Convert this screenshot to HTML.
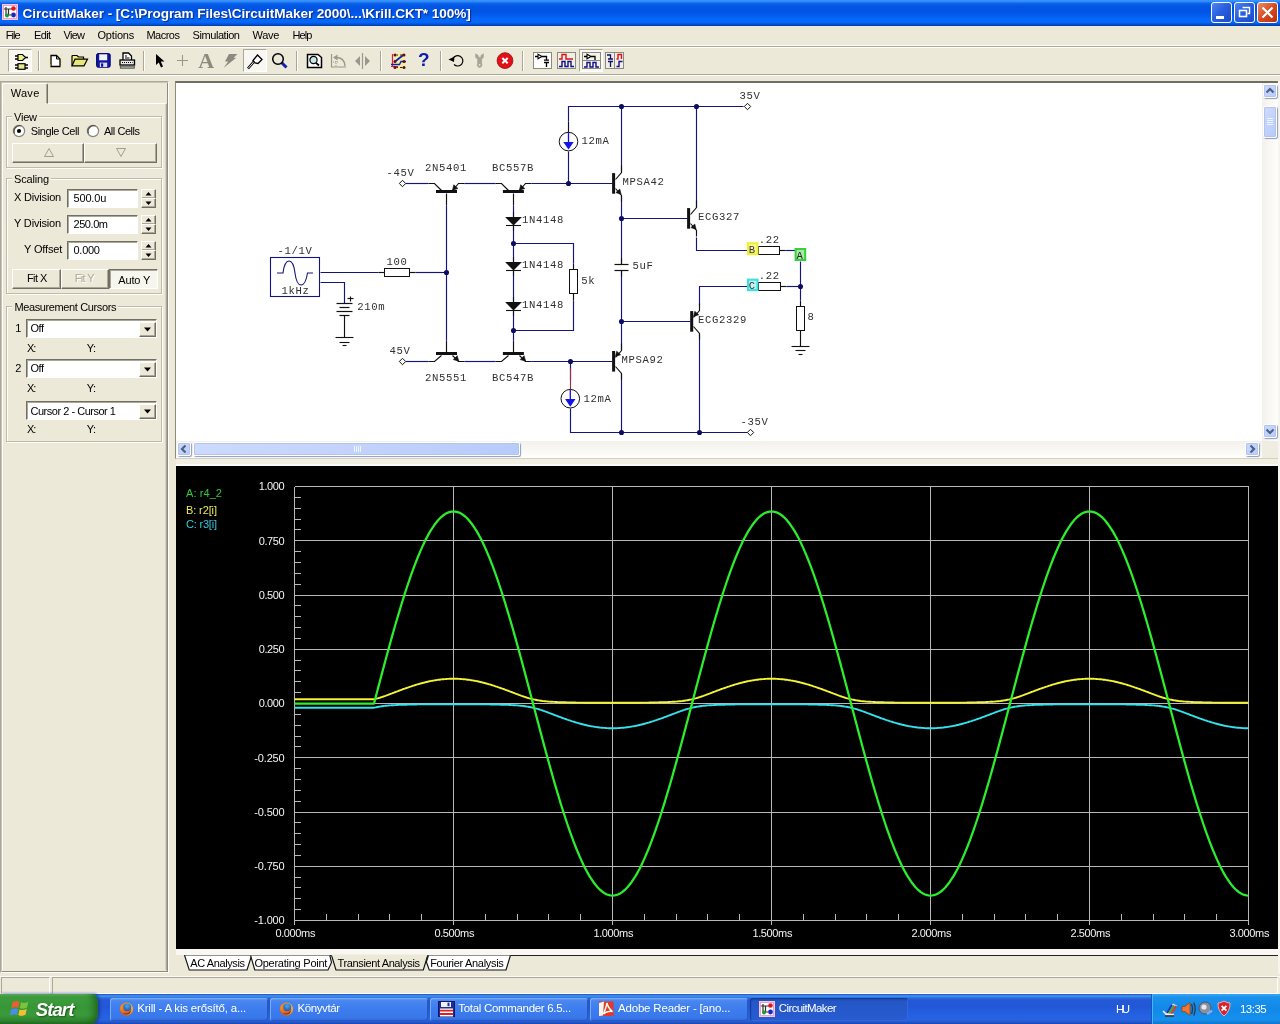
<!DOCTYPE html>
<html><head><meta charset="utf-8"><title>CircuitMaker</title>
<style>
*{box-sizing:border-box;margin:0;padding:0}
html,body{width:1280px;height:1024px;overflow:hidden;background:#ece9d8;font-family:"Liberation Sans",sans-serif;font-size:11px;color:#000}
div,span,svg{position:absolute}
svg{overflow:visible}
span,svg{will-change:opacity}
#titlebar{left:0;top:0;width:1280px;height:26px;
 background:linear-gradient(to bottom,#3e98ff 0%,#2e88fa 6%,#0c64ea 13%,#0256e4 22%,#0254e4 45%,#035cf0 60%,#0668fa 72%,#0668f6 86%,#0452d8 93%,#0236a8 100%);}
#titlebar .t{left:23px;top:4px;color:#fff;font-weight:bold;font-size:13.5px;text-shadow:1px 1px 1px #0a2a80;white-space:nowrap}
.cbtn{top:2px;width:21px;height:21px;border:1px solid #fff;border-radius:3px;background:linear-gradient(135deg,#4f86f0 0%,#2a5fe0 45%,#1c49c8 100%);}
.cbtn.close{background:linear-gradient(135deg,#ec8c6a 0%,#d64a22 50%,#b8300f 100%)}
#menubar{left:0;top:26px;width:1280px;height:20px;background:#ece9d8}
#menubar span{top:3px;font-size:11px;color:#000;white-space:nowrap}
.sep{top:51px;width:2px;height:20px;border-left:1px solid #aca899;border-right:1px solid #fff}
.pressed{background:#f8f7f1;border:1px solid;border-color:#aca899 #fff #fff #aca899}
.t11{font-size:11px;white-space:nowrap;color:#000}
.btn{background:#ece9d8;border:1px solid;border-color:#fff #716f64 #716f64 #fff;box-shadow:inset -1px -1px 0 #aca899}
.sunk{background:#fff;border:1px solid;border-color:#716f64 #fff #fff #716f64;box-shadow:inset 1px 1px 0 #aca899}
.grp{border:1px solid #bebba8;box-shadow:1px 1px 0 #fff, inset 1px 1px 0 #fff}

</style></head><body>
<div id="titlebar"><svg style="left:2px;top:4px" width="16" height="16" viewBox="0 0 16 16" ><rect x="0" y="0" width="16" height="16" fill="#f4c8e4"/>
<rect x="1.5" y="1.5" width="13" height="13" fill="#fff" stroke="#e9a0d0" stroke-width="1"/>
<path d="M2 5H10 M4 3V12 M6.5 5V11 H9" stroke="#303030" stroke-width="1.2" fill="none"/>
<circle cx="11.5" cy="4.5" r="2.3" fill="#e01818"/><circle cx="5" cy="11.5" r="2" fill="#18a030"/><circle cx="11.5" cy="11" r="2.4" fill="#1828c0"/></svg>
<span style="left:22.50px;top:5.7px;letter-spacing:-0.071px;font-size:13.6px;white-space:nowrap;font-weight:bold;color:#fff;text-shadow:1px 1px 1px #0a2a80;">CircuitMaker - [C:\Program Files\CircuitMaker 2000\...\Krill.CKT* 100%]</span><div class="cbtn" style="left:1211px"><div style="left:4px;top:13px;width:8px;height:3px;background:#fff"></div></div><div class="cbtn" style="left:1234px"><svg style="left:0px;top:0px" width="19" height="19" viewBox="0 0 19 19" ><path d="M7.5 4.5H14.5V10.5H12.5" stroke="#fff" stroke-width="1.4" fill="none"/><rect x="4.5" y="7.5" width="7" height="6" stroke="#fff" stroke-width="1.6" fill="none"/></svg>
</div><div class="cbtn close" style="left:1257px"><svg style="left:0px;top:0px" width="19" height="19" viewBox="0 0 19 19" ><path d="M4.5 4.5L14.5 14.5M14.5 4.5L4.5 14.5" stroke="#fff" stroke-width="2.2" fill="none"/></svg>
</div></div>
<div id="menubar"><span style="left:5.70px;top:3.3px;letter-spacing:-0.937px;font-size:11px;white-space:nowrap;">File</span><span style="left:33.90px;top:3.3px;letter-spacing:-0.558px;font-size:11px;white-space:nowrap;">Edit</span><span style="left:63.60px;top:3.3px;letter-spacing:-0.750px;font-size:11px;white-space:nowrap;">View</span><span style="left:97.50px;top:3.3px;letter-spacing:-0.199px;font-size:11px;white-space:nowrap;">Options</span><span style="left:146.40px;top:3.3px;letter-spacing:-0.496px;font-size:11px;white-space:nowrap;">Macros</span><span style="left:192.60px;top:3.3px;letter-spacing:-0.441px;font-size:11px;white-space:nowrap;">Simulation</span><span style="left:252.40px;top:3.3px;letter-spacing:-0.207px;font-size:11px;white-space:nowrap;">Wave</span><span style="left:292.60px;top:3.3px;letter-spacing:-0.935px;font-size:11px;white-space:nowrap;">Help</span></div>
<div style="left:0;top:45px;width:1280px;height:1px;background:#fbfaf6"></div><div style="left:0;top:46px;width:1280px;height:1px;background:#aca899"></div><div style="left:0;top:47px;width:1280px;height:1px;background:#fff"></div><div style="left:0;top:74px;width:1280px;height:1px;background:#aca899"></div><div style="left:0;top:75px;width:1280px;height:1px;background:#fff"></div>
<div class="pressed" style="left:8px;top:49px;width:24px;height:23px"></div><div class="pressed" style="left:243px;top:49px;width:24px;height:23px"></div><div class="pressed" style="left:579px;top:49px;width:24px;height:23px"></div><div class="sep" style="left:38px"></div><div class="sep" style="left:143px"></div><div class="sep" style="left:296px"></div><div class="sep" style="left:380px"></div><div class="sep" style="left:440px"></div><div class="sep" style="left:522px"></div>
<svg style="left:13px;top:53px" width="18" height="18" viewBox="0 0 18 18" ><path d="M2 3H5M2 6H5M12 4.5H15" stroke="#000" stroke-width="1.3"/>
<path d="M5 1.5H9.5L12.5 4.5L9.5 7.5H5Z" fill="#f0f080" stroke="#000" stroke-width="1.2"/>
<path d="M2 12H5M2 15H5M12 12H15M12 15H15" stroke="#000" stroke-width="1.3"/>
<rect x="5" y="10.7" width="7" height="5.6" fill="#e8e890" stroke="#000" stroke-width="1.2"/></svg>
<svg style="left:48px;top:53px" width="16" height="16" viewBox="0 0 16 16" ><path d="M3 2.5H8.5L12 6V13.5H3Z" fill="#fff" stroke="#000" stroke-width="1.3"/><path d="M8.5 2.5V6H12" fill="none" stroke="#000" stroke-width="1"/>
<path d="M1 8L2.2 8M1.5 12.5l1 -.8M13 3l1-.8M13.2 9h1M12.8 13l1 .8" stroke="#f0f040" stroke-width="1.4"/></svg>
<svg style="left:71px;top:53px" width="18" height="16" viewBox="0 0 18 16" ><path d="M1 12.5V3.5Q1 2.5 2 2.5H6L7.5 4H12.5V6" fill="#f0f080" stroke="#000" stroke-width="1.2"/>
<path d="M1 12.8L4 6.2H16.5L13 12.8Z" fill="#e8e878" stroke="#000" stroke-width="1.2"/></svg>
<svg style="left:96px;top:53px" width="15" height="15" viewBox="0 0 15 15" ><rect x="0.6" y="0.6" width="13.6" height="13.6" rx="1.5" fill="#1018a0" stroke="#000070" stroke-width="1"/>
<rect x="3.2" y="1.3" width="8" height="6" fill="#f4f4f4"/><rect x="3.8" y="9.6" width="7.4" height="4.4" fill="#d8d8e8"/><rect x="5" y="10.4" width="2.2" height="3.4" fill="#1018a0"/></svg>
<svg style="left:119px;top:52px" width="17" height="17" viewBox="0 0 17 17" ><path d="M4 8V1H9.5L12.5 4V8" fill="#fff" stroke="#000" stroke-width="1.3"/><path d="M6 4H8M6 6H10.5" stroke="#000" stroke-width="1.2"/>
<rect x="1" y="8" width="14.5" height="5" fill="#e8e8e0" stroke="#000" stroke-width="1.3"/><path d="M3 10.5H13.5" stroke="#000" stroke-width="1" stroke-dasharray="1 1"/>
<rect x="1.3" y="14" width="14" height="2.2" fill="#b0b0a8" stroke="#404040" stroke-width="0.8"/></svg>
<svg style="left:155px;top:53px" width="12" height="16" viewBox="0 0 12 16" ><path d="M1 1V12L3.8 9.4L6 14.5L8 13.6L5.8 8.6H9.5Z" fill="#000"/></svg>
<svg style="left:176px;top:54px" width="13" height="13" viewBox="0 0 13 13" ><path d="M6.5 1V12M1 6.5H12" stroke="#9a988c" stroke-width="1.1"/></svg>
<span style="left:198.3px;top:47.8px;font-family:'Liberation Serif',serif;font-weight:bold;font-size:22px;color:#8c8a80">A</span><svg style="left:222px;top:53px" width="16" height="16" viewBox="0 0 16 16" ><path d="M7 1H15.5L11.5 4.8H14.2L1.5 15L6.2 8.6H3Z" fill="#8c8a80"/></svg>
<svg style="left:246px;top:53px" width="18" height="18" viewBox="0 0 18 18" ><path d="M2 15.5L8 8.5" stroke="#000" stroke-width="2.6"/><path d="M2.3 15.2L8 8.6" stroke="#fff" stroke-width="0.9"/><path d="M7 7.5L11.5 2L16 6.5L12 10.5L9 10Z" fill="#fff" stroke="#000" stroke-width="1.3"/></svg>
<svg style="left:271px;top:52px" width="18" height="18" viewBox="0 0 18 18" ><path d="M10.5 10.5L15.5 15.5" stroke="#1020b0" stroke-width="3"/><circle cx="7" cy="7" r="5.3" fill="none" stroke="#000" stroke-width="1.5"/></svg>
<svg style="left:306px;top:53px" width="18" height="16" viewBox="0 0 18 16" ><path d="M1.5 1.5H12L15.5 4.5V14.5H1.5Z" fill="#fff" stroke="#000" stroke-width="1.5"/>
<circle cx="7.5" cy="7" r="3.6" fill="#c8e8e8" stroke="#000" stroke-width="1.2"/><path d="M10 9.8L13 12.5" stroke="#000" stroke-width="1.8"/></svg>
<svg style="left:330px;top:53px" width="17" height="16" viewBox="0 0 17 16" ><path d="M1.5 1V14H16" fill="none" stroke="#9a988c" stroke-width="1.2"/><path d="M6 4.5Q14.5 4.5 15 13" fill="none" stroke="#9a988c" stroke-width="1.4"/>
<path d="M3 4.5L7.5 1.5V7.5Z" fill="#9a988c"/><path d="M6 8V13M3 9H8" stroke="#9a988c" stroke-width="1" stroke-dasharray="1 1"/></svg>
<svg style="left:354px;top:53px" width="17" height="16" viewBox="0 0 17 16" ><path d="M8.5 0V16" stroke="#9a988c" stroke-width="1.2"/><path d="M6 3V13L1 8Z M11 3V13L16 8Z" fill="#9a988c"/></svg>
<svg style="left:390px;top:52px" width="18" height="18" viewBox="0 0 18 18" ><rect x="5" y="1" width="10" height="16" fill="#f4f090" opacity=".8"/>
<path d="M2.5 2V14.5" stroke="#e02020" stroke-width="1.2"/><path d="M1 14.5H8" stroke="#e02020" stroke-width="1"/>
<path d="M1 12.5H9.5L11 9.5H16" stroke="#1020c0" stroke-width="1.4" fill="none"/><path d="M5 9.5L14 2.5" stroke="#1020c0" stroke-width="1.8"/>
<g fill="#601010"><circle cx="5" cy="3" r="1.5"/><circle cx="14" cy="3" r="1.5"/><circle cx="5" cy="9.5" r="1.5"/><circle cx="14" cy="9.5" r="1.5"/><circle cx="5" cy="15.5" r="1.5"/><circle cx="14" cy="15.5" r="1.5"/></g>
<path d="M6.5 3H8M10 3H12.5M6.5 15.5H8M10 15.5H12.5" stroke="#601010" stroke-width="1"/></svg>
<span style="left:418px;top:49px;font-weight:bold;font-size:19px;color:#1018b0">?</span><svg style="left:448px;top:53px" width="18" height="15" viewBox="0 0 18 15" ><path d="M5 5.5A5.2 5.2 0 1 1 6 11.5" fill="none" stroke="#000" stroke-width="1.2"/><path d="M0.5 6.5L6.5 3.5L6 9Z" fill="#000"/></svg>
<svg style="left:474px;top:53px" width="11" height="15" viewBox="0 0 11 15" ><path d="M1.6 0.8V4.2L3.6 6.2V10.6A2.4 2.4 0 1 0 7.6 10.6V6.2L9.4 4.2V0.8L7 2.4V4.2H4.2V2.4Z" fill="#a8a69a" stroke="#98968a" stroke-width="0.5"/><circle cx="5.6" cy="11.8" r="0.9" fill="#ece9d8"/></svg>
<svg style="left:496px;top:52px" width="18" height="18" viewBox="0 0 18 18" ><circle cx="9" cy="8.6" r="7.9" fill="#e01018" stroke="#a00810" stroke-width="0.8"/><path d="M6.3 6L11.7 11.2M11.7 6L6.3 11.2" stroke="#fff" stroke-width="2"/></svg>
<svg style="left:533px;top:52px" width="19" height="17" viewBox="0 0 19 17" ><rect x="0.5" y="0.5" width="18" height="16" fill="#fff" stroke="#8c8a80"/>
<path d="M2 4.5H5M9 4.5H13.5V8M13.5 10.5V15" stroke="#000" stroke-width="1.3" fill="none"/><path d="M5 2.2V6.8L9 4.5Z" fill="#fff" stroke="#000" stroke-width="1.1"/>
<path d="M11 8.2H16M11 10.5H16" stroke="#000" stroke-width="1.3"/></svg>
<svg style="left:557px;top:52px" width="19" height="17" viewBox="0 0 19 17" ><rect x="0.5" y="0.5" width="18" height="16" fill="#f0efe6" stroke="#8c8a80"/>
<path d="M2 7H5V2.5H9V7H16" stroke="#e01010" stroke-width="1.4" fill="none"/>
<path d="M2 14.5H5V9.5H8V14.5H11V9.5H14V14.5H17" stroke="#101090" stroke-width="1.4" fill="none"/></svg>
<svg style="left:582px;top:52px" width="19" height="17" viewBox="0 0 19 17" ><rect x="0.5" y="0.5" width="18" height="16" fill="#f4f3ec" stroke="#8c8a80"/><path d="M0.5 8.5H18.5" stroke="#8c8a80"/>
<path d="M2 4.5H5M9 4.5H13V8" stroke="#000" stroke-width="1.3" fill="none"/><path d="M5 2.2V6.8L9 4.5Z" fill="#fff" stroke="#000" stroke-width="1.1"/>
<path d="M2 15H5V10.5H8V15H11V10.5H14V15H17" stroke="#101090" stroke-width="1.4" fill="none"/></svg>
<svg style="left:605px;top:52px" width="19" height="17" viewBox="0 0 19 17" ><rect x="0.5" y="0.5" width="18" height="16" fill="#f0efe6" stroke="#8c8a80"/><path d="M9.5 0.5V16.5" stroke="#8c8a80"/>
<path d="M2 3H5.5V7M5.5 9.5V15M3 7H8M3 9.5H8" stroke="#101060" stroke-width="1.3" fill="none"/>
<path d="M11.5 7H13V2.5H16.5V7" stroke="#e01010" stroke-width="1.4" fill="none"/><path d="M11.5 14.5H14V9.5H17.5" stroke="#101090" stroke-width="1.4" fill="none"/></svg>
<div style="left:0;top:81px;width:169px;height:892px;background:#ece9d8;border:1px solid;border-color:#aca899 #fff #fff #aca899;box-shadow:inset 1px 1px 0 #c8c5b2, inset -1px -1px 0 #8d8b7e"></div>
<div style="left:2px;top:103px;width:165px;height:868px;border:1px solid;border-color:#fff #aca899 #ece9d8 #fff;box-shadow:inset -1px 0 0 #d6d3c2"></div>
<div style="left:2px;top:83px;width:46px;height:21px;background:#ece9d8;border:1px solid;border-color:#fff #716f64 #ece9d8 #fff;box-shadow:inset -1px 0 0 #aca899;border-radius:2px 2px 0 0"></div>
<span class="t11" style="left:10.70px;top:86.8px;letter-spacing:0.293px;font-size:11px;">Wave</span>
<div class="grp" style="left:6px;top:116px;width:156px;height:52px"></div><div style="left:12px;top:115px;width:27px;height:3px;background:#ece9d8"></div><span class="t11" style="left:14.00px;top:110.8px;letter-spacing:-0.217px;font-size:11px;">View</span>
<svg style="left:12.3px;top:123.8px" width="14" height="14" viewBox="0 0 14 14" ><circle cx="7" cy="7" r="5.6" fill="#fff" stroke="#8a8878" stroke-width="1.2"/><path d="M2.5 9.5A5.6 5.6 0 0 1 9.5 2" fill="none" stroke="#555448" stroke-width="1.3"/><circle cx="7" cy="7" r="2.1" fill="#000"/></svg>

<svg style="left:85.8px;top:123.8px" width="14" height="14" viewBox="0 0 14 14" ><circle cx="7" cy="7" r="5.6" fill="#fff" stroke="#8a8878" stroke-width="1.2"/><path d="M2.5 9.5A5.6 5.6 0 0 1 9.5 2" fill="none" stroke="#555448" stroke-width="1.3"/></svg>

<span class="t11" style="left:30.70px;top:124.8px;letter-spacing:-0.378px;font-size:11px;">Single Cell</span>
<span class="t11" style="left:104.00px;top:124.8px;letter-spacing:-0.464px;font-size:11px;">All Cells</span>
<div class="btn" style="left:12px;top:143px;width:72px;height:20px"></div><div class="btn" style="left:84px;top:143px;width:73px;height:20px"></div>
<svg style="left:43px;top:147px" width="12" height="11" viewBox="0 0 12 11" ><path d="M6 1.5L10.5 9.5H1.5Z" fill="none" stroke="#a09e92" stroke-width="1"/></svg>

<svg style="left:115px;top:147px" width="12" height="11" viewBox="0 0 12 11" ><path d="M6 9.5L10.5 1.5H1.5Z" fill="none" stroke="#a09e92" stroke-width="1"/></svg>

<div class="grp" style="left:6px;top:178px;width:156px;height:116px"></div><div style="left:12px;top:177px;width:39px;height:3px;background:#ece9d8"></div><span class="t11" style="left:14.00px;top:173.0px;letter-spacing:-0.180px;font-size:11px;">Scaling</span>
<span class="t11" style="left:14.00px;top:191.4px;letter-spacing:-0.188px;font-size:11px;">X Division</span>
<div class="sunk" style="left:67px;top:189px;width:71px;height:19px"></div>
<span class="t11" style="left:73.50px;top:192.4px;letter-spacing:-0.172px;font-size:11px;">500.0u</span>
<div class="btn" style="left:141px;top:189px;width:15px;height:10px"></div><div class="btn" style="left:141px;top:198px;width:15px;height:10px"></div><svg style="left:141px;top:189px" width="15" height="19" viewBox="0 0 15 19" ><path d="M7.5 3L10.5 6.5H4.5Z M7.5 16L10.5 12.5H4.5Z" fill="#000"/></svg>

<span class="t11" style="left:14.00px;top:217.0px;letter-spacing:-0.170px;font-size:11px;">Y Division</span>
<div class="sunk" style="left:67px;top:215px;width:71px;height:19px"></div>
<span class="t11" style="left:73.50px;top:218.2px;letter-spacing:-0.437px;font-size:11px;">250.0m</span>
<div class="btn" style="left:141px;top:215px;width:15px;height:10px"></div><div class="btn" style="left:141px;top:224px;width:15px;height:10px"></div><svg style="left:141px;top:215px" width="15" height="19" viewBox="0 0 15 19" ><path d="M7.5 3L10.5 6.5H4.5Z M7.5 16L10.5 12.5H4.5Z" fill="#000"/></svg>

<span class="t11" style="left:24.00px;top:243.0px;letter-spacing:-0.146px;font-size:11px;">Y Offset</span>
<div class="sunk" style="left:67px;top:241px;width:71px;height:19px"></div>
<span class="t11" style="left:73.50px;top:243.6px;letter-spacing:-0.264px;font-size:11px;">0.000</span>
<div class="btn" style="left:141px;top:241px;width:15px;height:10px"></div><div class="btn" style="left:141px;top:250px;width:15px;height:10px"></div><svg style="left:141px;top:241px" width="15" height="19" viewBox="0 0 15 19" ><path d="M7.5 3L10.5 6.5H4.5Z M7.5 16L10.5 12.5H4.5Z" fill="#000"/></svg>

<div class="btn" style="left:12px;top:269px;width:49px;height:20px"></div><span class="t11" style="left:26.90px;top:272.4px;letter-spacing:-0.551px;font-size:11px;">Fit X</span>
<div class="btn" style="left:61px;top:269px;width:48px;height:20px"></div><span class="t11" style="left:74.80px;top:272.4px;letter-spacing:-0.685px;font-size:11px;color:#aca899;text-shadow:1px 1px 0 #fff">Fit Y</span>
<div style="left:109px;top:269px;width:49px;height:20px;background:#f6f5ee;border:1px solid;border-color:#716f64 #fff #fff #716f64;box-shadow:inset 1px 1px 0 #aca899"></div><span class="t11" style="left:118.20px;top:273.6px;letter-spacing:-0.127px;font-size:11px;">Auto Y</span>
<div class="grp" style="left:6px;top:306px;width:156px;height:136px"></div><div style="left:12.4px;top:305px;width:106.0px;height:3px;background:#ece9d8"></div><span class="t11" style="left:14.40px;top:300.9px;letter-spacing:-0.377px;font-size:11px;">Measurement Cursors</span>
<span class="t11" style="left:15.30px;top:322.3px;letter-spacing:0.000px;font-size:11px;">1</span>
<div class="sunk" style="left:26px;top:319px;width:131px;height:19px"><div class="btn" style="left:112px;top:2px;width:17px;height:15px"></div><svg style="left:112px;top:2px" width="17" height="15" viewBox="0 0 17 15" ><path d="M5 5.5H12L8.5 9.5Z" fill="#000"/></svg>
</div>
<span class="t11" style="left:30.50px;top:322.3px;letter-spacing:-0.510px;font-size:11px;">Off</span>
<span class="t11" style="left:26.90px;top:342.0px;letter-spacing:-1.095px;font-size:11px;">X:</span>
<span class="t11" style="left:86.70px;top:342.0px;letter-spacing:-0.490px;font-size:11px;">Y:</span>
<span class="t11" style="left:15.30px;top:362.0px;letter-spacing:0.000px;font-size:11px;">2</span>
<div class="sunk" style="left:26px;top:359px;width:131px;height:19px"><div class="btn" style="left:112px;top:2px;width:17px;height:15px"></div><svg style="left:112px;top:2px" width="17" height="15" viewBox="0 0 17 15" ><path d="M5 5.5H12L8.5 9.5Z" fill="#000"/></svg>
</div>
<span class="t11" style="left:30.50px;top:362.3px;letter-spacing:-0.510px;font-size:11px;">Off</span>
<span class="t11" style="left:26.90px;top:381.7px;letter-spacing:-1.095px;font-size:11px;">X:</span>
<span class="t11" style="left:86.70px;top:381.7px;letter-spacing:-0.490px;font-size:11px;">Y:</span>
<div class="sunk" style="left:26px;top:401px;width:131px;height:19px"><div class="btn" style="left:112px;top:2px;width:17px;height:15px"></div><svg style="left:112px;top:2px" width="17" height="15" viewBox="0 0 17 15" ><path d="M5 5.5H12L8.5 9.5Z" fill="#000"/></svg>
</div>
<span class="t11" style="left:30.50px;top:404.5px;letter-spacing:-0.481px;font-size:11px;">Cursor 2 - Cursor 1</span>
<span class="t11" style="left:26.90px;top:423.0px;letter-spacing:-1.095px;font-size:11px;">X:</span>
<span class="t11" style="left:86.70px;top:423.0px;letter-spacing:-0.490px;font-size:11px;">Y:</span>
<div style="left:175px;top:81px;width:1104px;height:378px;background:#fff;border-top:2px solid #716f64;border-left:1px solid #8d8b7e;border-bottom:1px solid #d4d0c0"></div>
<div style="left:1262px;top:83px;width:16px;height:358px;background:linear-gradient(to right,#f3f1ec,#fefefb)"></div>
<div style="left:176px;top:441px;width:1086px;height:17px;background:linear-gradient(to bottom,#f3f1ec,#fefefb)"></div>
<div style="left:1262px;top:441px;width:16px;height:17px;background:#efede2"></div>
<div style="left:176px;top:459px;width:1102px;height:5px;background:#f1eee2"></div>
<div style="left:176px;top:464px;width:1102px;height:2px;background:#fbfaf6"></div>
<div style="left:1278px;top:81px;width:2px;height:894px;background:#f6f5ef"></div>
<div style="left:1263px;top:83.5px;width:14px;height:14px;background:linear-gradient(135deg,#cddafd,#b7cbfa);border:1px solid #fff;border-radius:2px;box-shadow:0 0 0 1px #b4c4ec inset, 1px 1px 1px #8e9cc0"></div><svg style="left:1263px;top:83.5px" width="14" height="14"><path d="M3.5 8.5L7 5L10.5 8.5" stroke="#4d6185" stroke-width="2.2" fill="none"/></svg>
<div style="left:1263px;top:424px;width:14px;height:14px;background:linear-gradient(135deg,#cddafd,#b7cbfa);border:1px solid #fff;border-radius:2px;box-shadow:0 0 0 1px #b4c4ec inset, 1px 1px 1px #8e9cc0"></div><svg style="left:1263px;top:424px" width="14" height="14"><path d="M3.5 5.5L7 9L10.5 5.5" stroke="#4d6185" stroke-width="2.2" fill="none"/></svg>
<div style="left:177px;top:441.5px;width:14px;height:14px;background:linear-gradient(135deg,#cddafd,#b7cbfa);border:1px solid #fff;border-radius:2px;box-shadow:0 0 0 1px #b4c4ec inset, 1px 1px 1px #8e9cc0"></div><svg style="left:177px;top:441.5px" width="14" height="14"><path d="M8.5 3.5L5 7L8.5 10.5" stroke="#4d6185" stroke-width="2.2" fill="none"/></svg>
<div style="left:1245px;top:441.5px;width:14px;height:14px;background:linear-gradient(135deg,#cddafd,#b7cbfa);border:1px solid #fff;border-radius:2px;box-shadow:0 0 0 1px #b4c4ec inset, 1px 1px 1px #8e9cc0"></div><svg style="left:1245px;top:441.5px" width="14" height="14"><path d="M5.5 3.5L9 7L5.5 10.5" stroke="#4d6185" stroke-width="2.2" fill="none"/></svg>
<div style="left:1263px;top:105.5px;width:14px;height:32px;background:linear-gradient(135deg,#cddafd,#b7cbfa);border:1px solid #fff;border-radius:2px;box-shadow:0 0 0 1px #b4c4ec inset, 1px 1px 1px #8e9cc0"></div>
<svg style="left:1263px;top:106px" width="14" height="31"><path d="M4 12.5H10M4 14.5H10M4 16.5H10M4 18.5H10" stroke="#eef4fe" stroke-width="1"/></svg>
<div style="left:193px;top:441.5px;width:327px;height:14px;background:linear-gradient(135deg,#cddafd,#b7cbfa);border:1px solid #fff;border-radius:2px;box-shadow:0 0 0 1px #b4c4ec inset, 1px 1px 1px #8e9cc0"></div>
<svg style="left:350px;top:442px" width="14" height="14"><path d="M4.5 4V10M6.5 4V10M8.5 4V10M10.5 4V10" stroke="#eef4fe" stroke-width="1"/></svg>
<svg style="left:0;top:0" width="1280" height="460" viewBox="0 0 1280 460" font-family="'Liberation Mono',monospace" font-size="10.6px" letter-spacing="0.64px">
<path d="M568.5 121.5 L568.5 106.5 L743.5 106.5" stroke="#14147e" stroke-width="1.15" fill="none"/>
<path d="M621.5 106.5 L621.5 171.5" stroke="#14147e" stroke-width="1.15" fill="none"/>
<path d="M696.5 106.5 L696.5 207.5" stroke="#14147e" stroke-width="1.15" fill="none"/>
<path d="M568.5 151.5 L568.5 183.5" stroke="#14147e" stroke-width="1.15" fill="none"/>
<path d="M405.5 183.5 L428.5 183.5" stroke="#14147e" stroke-width="1.15" fill="none"/>
<path d="M464.5 183.5 L495.5 183.5" stroke="#14147e" stroke-width="1.15" fill="none"/>
<path d="M531.5 183.5 L612.5 183.5" stroke="#14147e" stroke-width="1.15" fill="none"/>
<path d="M446.5 205.5 L446.5 340.5" stroke="#14147e" stroke-width="1.15" fill="none"/>
<path d="M320.5 272.5 L378.5 272.5" stroke="#14147e" stroke-width="1.15" fill="none"/>
<path d="M415.5 272.5 L446.5 272.5" stroke="#14147e" stroke-width="1.15" fill="none"/>
<path d="M320.5 282.5 L344.5 282.5 L344.5 303.5" stroke="#14147e" stroke-width="1.15" fill="none"/>
<path d="M405.5 361.5 L428.5 361.5" stroke="#14147e" stroke-width="1.15" fill="none"/>
<path d="M464.5 361.5 L495.5 361.5" stroke="#14147e" stroke-width="1.15" fill="none"/>
<path d="M531.5 361.5 L612.5 361.5" stroke="#14147e" stroke-width="1.15" fill="none"/>
<path d="M513.5 205.5 L513.5 217.5" stroke="#14147e" stroke-width="1.15" fill="none"/>
<path d="M513.5 226.5 L513.5 262.5" stroke="#14147e" stroke-width="1.15" fill="none"/>
<path d="M513.5 271.5 L513.5 302.5" stroke="#14147e" stroke-width="1.15" fill="none"/>
<path d="M513.5 311.5 L513.5 340.5" stroke="#14147e" stroke-width="1.15" fill="none"/>
<path d="M513.5 243.5 L573.5 243.5 L573.5 263.5" stroke="#14147e" stroke-width="1.15" fill="none"/>
<path d="M573.5 300.5 L573.5 330.5 L513.5 330.5" stroke="#14147e" stroke-width="1.15" fill="none"/>
<path d="M621.5 195.5 L621.5 264.5" stroke="#14147e" stroke-width="1.15" fill="none"/>
<path d="M621.5 270.5 L621.5 349.5" stroke="#14147e" stroke-width="1.15" fill="none"/>
<path d="M621.5 218.5 L687.5 218.5" stroke="#14147e" stroke-width="1.15" fill="none"/>
<path d="M621.5 321.5 L690.5 321.5" stroke="#14147e" stroke-width="1.15" fill="none"/>
<path d="M696.5 237.5 L696.5 250.5 L747.5 250.5" stroke="#14147e" stroke-width="1.15" fill="none"/>
<path d="M785.5 250.5 L795.5 250.5" stroke="#14147e" stroke-width="1.15" fill="none"/>
<path d="M800.5 261.5 L800.5 300.5" stroke="#14147e" stroke-width="1.15" fill="none"/>
<path d="M699.5 305.5 L699.5 286.5 L747.5 286.5" stroke="#14147e" stroke-width="1.15" fill="none"/>
<path d="M786.5 286.5 L800.5 286.5" stroke="#14147e" stroke-width="1.15" fill="none"/>
<path d="M699.5 333.5 L699.5 432.5" stroke="#14147e" stroke-width="1.15" fill="none"/>
<path d="M621.5 373.5 L621.5 432.5" stroke="#14147e" stroke-width="1.15" fill="none"/>
<path d="M570.5 361.5 L570.5 380.5" stroke="#14147e" stroke-width="1.15" fill="none"/>
<path d="M570.5 408.5 L570.5 432.5 L747.5 432.5" stroke="#14147e" stroke-width="1.15" fill="none"/>
<path d="M568.5 121.5 L568.5 132.5" stroke="#111" stroke-width="1.15" fill="none"/>
<path d="M570.5 368.5 L570.5 389.5" stroke="#9a3040" stroke-width="1.15" fill="none"/>
<rect x="436.0" y="190" width="21" height="3" fill="#111"/><path d="M428.5 183.5 L434.5 183.5 L441.5 190.5" stroke="#111" stroke-width="1.15" fill="none"/><path d="M464.5 183.5 L458.5 183.5 L452.5 190.5" stroke="#111" stroke-width="1.15" fill="none"/><path d="M452.5 190.3L453.8 184.8L457.9 188.5Z" fill="#111" stroke="#111" stroke-width="0.6"/><path d="M446.5 193.5 L446.5 205.5" stroke="#111" stroke-width="1.15" fill="none"/>
<rect x="502.9" y="190" width="21" height="3" fill="#111"/><path d="M495.5 183.5 L501.5 183.5 L508.5 190.5" stroke="#111" stroke-width="1.15" fill="none"/><path d="M531.5 183.5 L525.5 183.5 L519.5 190.5" stroke="#111" stroke-width="1.15" fill="none"/><path d="M519.4 190.3L520.7 184.8L524.8 188.5Z" fill="#111" stroke="#111" stroke-width="0.6"/><path d="M513.5 193.5 L513.5 205.5" stroke="#111" stroke-width="1.15" fill="none"/>
<rect x="436.0" y="352" width="21" height="3" fill="#111"/><path d="M428.5 361.5 L434.5 361.5 L441.5 355.5" stroke="#111" stroke-width="1.15" fill="none"/><path d="M464.5 361.5 L458.5 361.5 L452.5 355.5" stroke="#111" stroke-width="1.15" fill="none"/><path d="M458.8 361.2L453.3 359.6L457.2 355.7Z" fill="#111" stroke="#111" stroke-width="0.6"/><path d="M446.5 352.5 L446.5 340.5" stroke="#111" stroke-width="1.15" fill="none"/>
<rect x="502.9" y="352" width="21" height="3" fill="#111"/><path d="M495.5 361.5 L501.5 361.5 L508.5 355.5" stroke="#111" stroke-width="1.15" fill="none"/><path d="M531.5 361.5 L525.5 361.5 L519.5 355.5" stroke="#111" stroke-width="1.15" fill="none"/><path d="M525.7 361.2L520.2 359.6L524.1 355.7Z" fill="#111" stroke="#111" stroke-width="0.6"/><path d="M513.5 352.5 L513.5 340.5" stroke="#111" stroke-width="1.15" fill="none"/>
<rect x="612.1" y="173.1" width="3" height="20.6" fill="#111"/><path d="M615.5 179.5 L621.5 172.5 L621.5 165.5" stroke="#111" stroke-width="1.15" fill="none"/><path d="M615.5 188.5 L621.5 195.5 L621.5 201.5" stroke="#111" stroke-width="1.15" fill="none"/><path d="M621.1 194.4L615.9 192.6L619.8 189.1Z" fill="#111" stroke="#111" stroke-width="0.6"/>
<rect x="687.1" y="208.1" width="3" height="20.6" fill="#111"/><path d="M690.5 214.5 L696.5 207.5 L696.5 200.5" stroke="#111" stroke-width="1.15" fill="none"/><path d="M690.5 223.5 L696.5 230.5 L696.5 236.5" stroke="#111" stroke-width="1.15" fill="none"/><path d="M696.1 229.4L690.9 227.6L694.8 224.1Z" fill="#111" stroke="#111" stroke-width="0.6"/>
<rect x="612.1" y="351.0" width="3" height="20.6" fill="#111"/><path d="M615.5 357.5 L621.5 350.5 L621.5 343.5" stroke="#111" stroke-width="1.15" fill="none"/><path d="M615.5 366.5 L621.5 373.5 L621.5 379.5" stroke="#111" stroke-width="1.15" fill="none"/><path d="M615.4 356.5L616.7 351.2L620.6 354.7Z" fill="#111" stroke="#111" stroke-width="0.6"/>
<rect x="690.2" y="311.09999999999997" width="3" height="20.6" fill="#111"/><path d="M693.5 317.5 L699.5 310.5 L699.5 303.5" stroke="#111" stroke-width="1.15" fill="none"/><path d="M693.5 326.5 L699.5 333.5 L699.5 339.5" stroke="#111" stroke-width="1.15" fill="none"/><path d="M693.5 316.6L694.8 311.3L698.7 314.8Z" fill="#111" stroke="#111" stroke-width="0.6"/>
<path d="M505.1 217H521.9L513.5 225.4Z" fill="#111"/><path d="M506.0 225.5H521.0" stroke="#111" stroke-width="1.1"/><path d="M513.5 212V217M513.5 226V231" stroke="#111" stroke-width="1.1"/>
<path d="M505.1 262H521.9L513.5 270.4Z" fill="#111"/><path d="M506.0 270.5H521.0" stroke="#111" stroke-width="1.1"/><path d="M513.5 257V262M513.5 271V276" stroke="#111" stroke-width="1.1"/>
<path d="M505.1 302H521.9L513.5 310.4Z" fill="#111"/><path d="M506.0 310.5H521.0" stroke="#111" stroke-width="1.1"/><path d="M513.5 297V302M513.5 311V316" stroke="#111" stroke-width="1.1"/>
<path d="M378.5 272.5 L384.5 272.5" stroke="#111" stroke-width="1.15" fill="none"/>
<path d="M409.5 272.5 L415.5 272.5" stroke="#111" stroke-width="1.15" fill="none"/>
<rect x="384.5" y="268.5" width="25.0" height="8" fill="#fff" stroke="#111" stroke-width="1"/>
<path d="M573.5 263.5 L573.5 269.5" stroke="#111" stroke-width="1.15" fill="none"/>
<path d="M573.5 293.5 L573.5 300.5" stroke="#111" stroke-width="1.15" fill="none"/>
<rect x="569.5" y="269.5" width="8" height="24.0" fill="#fff" stroke="#111" stroke-width="1"/>
<path d="M779.5 250.5 L785.5 250.5" stroke="#111" stroke-width="1.15" fill="none"/>
<rect x="758.5" y="246.5" width="21.0" height="8" fill="#fff" stroke="#111" stroke-width="1"/>
<path d="M780.5 286.5 L786.5 286.5" stroke="#111" stroke-width="1.15" fill="none"/>
<rect x="758.5" y="282.5" width="22.0" height="8" fill="#fff" stroke="#111" stroke-width="1"/>
<path d="M800.5 300.5 L800.5 306.5" stroke="#111" stroke-width="1.15" fill="none"/>
<path d="M800.5 330.5 L800.5 346.5" stroke="#111" stroke-width="1.15" fill="none"/>
<rect x="796.5" y="306.5" width="8" height="24.0" fill="#fff" stroke="#111" stroke-width="1"/>
<path d="M791.5 346.5 L809.5 346.5" stroke="#111" stroke-width="1.1" fill="none"/><path d="M795.5 350.5 L805.5 350.5" stroke="#111" stroke-width="1.1" fill="none"/><path d="M798.5 354.5 L802.5 354.5" stroke="#111" stroke-width="1.1" fill="none"/>
<path d="M614.5 264.5 L628.5 264.5" stroke="#111" stroke-width="1.2" fill="none"/>
<path d="M614.5 270.5 L628.5 270.5" stroke="#111" stroke-width="1.2" fill="none"/>
<path d="M621.5 258.5 L621.5 264.5" stroke="#111" stroke-width="1.15" fill="none"/>
<path d="M621.5 270.5 L621.5 276.5" stroke="#111" stroke-width="1.15" fill="none"/>
<path d="M336.5 303.5 L352.5 303.5" stroke="#111" stroke-width="1.2" fill="none"/>
<path d="M339.5 307.5 L349.5 307.5" stroke="#111" stroke-width="1.2" fill="none"/>
<path d="M336.5 311.5 L352.5 311.5" stroke="#111" stroke-width="1.2" fill="none"/>
<path d="M339.5 315.5 L349.5 315.5" stroke="#111" stroke-width="1.2" fill="none"/>
<path d="M344.5 315.5 L344.5 337.5" stroke="#111" stroke-width="1.15" fill="none"/>
<path d="M335.5 337.5 L353.5 337.5" stroke="#111" stroke-width="1.1" fill="none"/><path d="M339.5 342.5 L349.5 342.5" stroke="#111" stroke-width="1.1" fill="none"/><path d="M342.5 345.5 L346.5 345.5" stroke="#111" stroke-width="1.1" fill="none"/>
<path d="M347.5 298.5 L353.5 298.5" stroke="#111" stroke-width="1.15" fill="none"/>
<path d="M350.5 296.5 L350.5 301.5" stroke="#111" stroke-width="1.15" fill="none"/>
<rect x="270.5" y="257.5" width="49" height="39" fill="#fff" stroke="#14147e" stroke-width="1.1"/>
<path d="M277 273H283C285 257 293 257 295 273S305 289 307.5 273H313" fill="none" stroke="#14147e" stroke-width="1.1"/>
<circle cx="568.5" cy="141.6" r="9.3" fill="#fff" stroke="#111" stroke-width="1"/><path d="M568.5 132.29999999999998V142.6" stroke="#1010e0" stroke-width="1.3"/><path d="M563.3 141.9H573.7L568.5 149.6Z" fill="#1414e6"/>
<circle cx="570.3" cy="398.7" r="9.3" fill="#fff" stroke="#111" stroke-width="1"/><path d="M570.3 389.4V399.7" stroke="#1010e0" stroke-width="1.3"/><path d="M565.0999999999999 399.0H575.5L570.3 406.7Z" fill="#1414e6"/>
<path d="M399.3 183.5L402.5 180.3L405.7 183.5L402.5 186.7Z" fill="#fff" stroke="#111" stroke-width="1"/>
<path d="M399.3 361.5L402.5 358.3L405.7 361.5L402.5 364.7Z" fill="#fff" stroke="#111" stroke-width="1"/>
<path d="M744.3 106.5L747.5 103.3L750.7 106.5L747.5 109.7Z" fill="#fff" stroke="#111" stroke-width="1"/>
<path d="M747.3 432.5L750.5 429.3L753.7 432.5L750.5 435.7Z" fill="#fff" stroke="#111" stroke-width="1"/>
<circle cx="621.5" cy="106.5" r="2.55" fill="#0c0c60"/>
<circle cx="696.5" cy="106.5" r="2.55" fill="#0c0c60"/>
<circle cx="568.5" cy="183.5" r="2.55" fill="#0c0c60"/>
<circle cx="446.5" cy="272.5" r="2.55" fill="#0c0c60"/>
<circle cx="513.5" cy="243.5" r="2.55" fill="#0c0c60"/>
<circle cx="513.5" cy="330.5" r="2.55" fill="#0c0c60"/>
<circle cx="621.5" cy="218.5" r="2.55" fill="#0c0c60"/>
<circle cx="621.5" cy="321.5" r="2.55" fill="#0c0c60"/>
<circle cx="570.5" cy="361.5" r="2.55" fill="#0c0c60"/>
<circle cx="621.5" cy="432.5" r="2.55" fill="#0c0c60"/>
<circle cx="699.5" cy="432.5" r="2.55" fill="#0c0c60"/>
<circle cx="800.5" cy="286.5" r="2.55" fill="#0c0c60"/>
<rect x="746.9" y="242.2" width="11.6" height="13" fill="#f0f030"/><rect x="749" y="244.3" width="7.4" height="8.8" fill="#f6f6a0"/>
<rect x="746.9" y="278.6" width="11.6" height="12.6" fill="#3ce0e0"/><rect x="749" y="280.7" width="7.4" height="8.4" fill="#c4f2f2"/>
<rect x="794.6" y="248" width="11.6" height="13" fill="#38d038"/><rect x="796.6" y="250" width="7.6" height="9" fill="#a8e8a8"/>
<text x="739.4" y="99" fill="#303030">35V</text>
<text x="581.6" y="143.8" fill="#303030">12mA</text>
<text x="386.4" y="175.6" fill="#303030">-45V</text>
<text x="425.0" y="171" fill="#303030">2N5401</text>
<text x="491.9" y="171" fill="#303030">BC557B</text>
<text x="622.4" y="184.8" fill="#303030">MPSA42</text>
<text x="521.9" y="223" fill="#303030">1N4148</text>
<text x="698.0" y="220" fill="#303030">ECG327</text>
<text x="758.6999999999999" y="242.8" fill="#303030">.22</text>
<text x="758.6999999999999" y="278.8" fill="#303030">.22</text>
<text x="277.4" y="254.4" fill="#303030">-1/1V</text>
<text x="386.4" y="264.8" fill="#303030">100</text>
<text x="521.9" y="268" fill="#303030">1N4148</text>
<text x="632.4" y="269" fill="#303030">5uF</text>
<text x="581.1999999999999" y="283.5" fill="#303030">5k</text>
<text x="281.4" y="293.8" fill="#303030">1kHz</text>
<text x="357.2" y="309.8" fill="#303030">210m</text>
<text x="521.9" y="308" fill="#303030">1N4148</text>
<text x="698.0" y="322.8" fill="#303030">ECG2329</text>
<text x="807.4" y="319.8" fill="#303030">8</text>
<text x="389.4" y="354" fill="#303030">45V</text>
<text x="621.4" y="362.8" fill="#303030">MPSA92</text>
<text x="425.0" y="381" fill="#303030">2N5551</text>
<text x="491.9" y="381" fill="#303030">BC547B</text>
<text x="583.4" y="401.5" fill="#303030">12mA</text>
<text x="740.4" y="425.2" fill="#303030">-35V</text>
<text x="748.6999999999999" y="253" fill="#333">B</text>
<text x="748.6999999999999" y="289" fill="#333">C</text>
<text x="796.6" y="259" fill="#222">A</text>
</svg>
<div style="left:176px;top:466px;width:1102px;height:483px;background:#000"></div>
<svg style="left:0;top:0" width="1280" height="1024" viewBox="0 0 1280 1024" font-family="'Liberation Sans',sans-serif" font-size="11px">
<path d="M294.5 486.5V924.5M453.5 486.5V924.5M612.5 486.5V924.5M771.5 486.5V924.5M930.5 486.5V924.5M1089.5 486.5V924.5M1248.5 486.5V924.5M294.5 486.50H1248.5M294.5 540.75H1248.5M294.5 595.00H1248.5M294.5 649.25H1248.5M294.5 703.50H1248.5M294.5 757.75H1248.5M294.5 812.00H1248.5M294.5 866.25H1248.5M294.5 920.50H1248.5M326.3 920.5v-7M358.1 920.5v-7M389.9 920.5v-7M421.7 920.5v-7M485.3 920.5v-7M517.1 920.5v-7M548.9 920.5v-7M580.7 920.5v-7M644.3 920.5v-7M676.1 920.5v-7M707.9 920.5v-7M739.7 920.5v-7M803.3 920.5v-7M835.1 920.5v-7M866.9 920.5v-7M898.7 920.5v-7M962.3 920.5v-7M994.1 920.5v-7M1025.9 920.5v-7M1057.7 920.5v-7M1121.3 920.5v-7M1153.1 920.5v-7M1184.9 920.5v-7M1216.7 920.5v-7M294.5 497.35h6M294.5 508.20h6M294.5 519.05h6M294.5 529.90h6M294.5 551.60h6M294.5 562.45h6M294.5 573.30h6M294.5 584.15h6M294.5 605.85h6M294.5 616.70h6M294.5 627.55h6M294.5 638.40h6M294.5 660.10h6M294.5 670.95h6M294.5 681.80h6M294.5 692.65h6M294.5 714.35h6M294.5 725.20h6M294.5 736.05h6M294.5 746.90h6M294.5 768.60h6M294.5 779.45h6M294.5 790.30h6M294.5 801.15h6M294.5 822.85h6M294.5 833.70h6M294.5 844.55h6M294.5 855.40h6M294.5 877.10h6M294.5 887.95h6M294.5 898.80h6M294.5 909.65h6" stroke="#b8b8b8" stroke-width="1" fill="none" shape-rendering="crispEdges"/>
<path d="M294.5 699.3L295.5 699.3L296.5 699.3L297.5 699.3L298.5 699.3L299.5 699.3L300.5 699.3L301.5 699.3L302.5 699.3L303.5 699.3L304.5 699.3L305.5 699.3L306.5 699.3L307.5 699.3L308.5 699.3L309.5 699.3L310.5 699.3L311.5 699.3L312.5 699.3L313.5 699.3L314.5 699.3L315.5 699.3L316.5 699.3L317.5 699.3L318.5 699.3L319.5 699.3L320.5 699.3L321.5 699.3L322.5 699.3L323.5 699.3L324.5 699.3L325.5 699.3L326.5 699.3L327.5 699.3L328.5 699.3L329.5 699.3L330.5 699.3L331.5 699.3L332.5 699.3L333.5 699.3L334.5 699.3L335.5 699.3L336.5 699.3L337.5 699.3L338.5 699.3L339.5 699.3L340.5 699.3L341.5 699.3L342.5 699.3L343.5 699.3L344.5 699.3L345.5 699.3L346.5 699.3L347.5 699.3L348.5 699.3L349.5 699.3L350.5 699.3L351.5 699.3L352.5 699.3L353.5 699.3L354.5 699.3L355.5 699.3L356.5 699.3L357.5 699.3L358.5 699.3L359.5 699.3L360.5 699.3L361.5 699.3L362.5 699.3L363.5 699.3L364.5 699.3L365.5 699.3L366.5 699.3L367.5 699.3L368.5 699.3L369.5 699.3L370.5 699.3L371.5 699.3L372.5 699.3L373.5 699.3L374.0 699.3L374.5 699.1L375.5 698.9L376.5 698.6L377.5 698.4L378.5 698.1L379.5 697.8L380.5 697.5L381.5 697.1L382.5 696.8L383.5 696.5L384.5 696.1L385.5 695.8L386.5 695.4L387.5 695.1L388.5 694.7L389.5 694.3L390.5 693.9L391.5 693.6L392.5 693.2L393.5 692.8L394.5 692.4L395.5 692.0L396.5 691.7L397.5 691.3L398.5 690.9L399.5 690.5L400.5 690.2L401.5 689.8L402.5 689.4L403.5 689.0L404.5 688.7L405.5 688.3L406.5 688.0L407.5 687.6L408.5 687.3L409.5 686.9L410.5 686.6L411.5 686.3L412.5 685.9L413.5 685.6L414.5 685.3L415.5 685.0L416.5 684.7L417.5 684.4L418.5 684.1L419.5 683.8L420.5 683.5L421.5 683.3L422.5 683.0L423.5 682.7L424.5 682.5L425.5 682.2L426.5 682.0L427.5 681.8L428.5 681.5L429.5 681.3L430.5 681.1L431.5 680.9L432.5 680.7L433.5 680.6L434.5 680.4L435.5 680.2L436.5 680.1L437.5 679.9L438.5 679.8L439.5 679.7L440.5 679.5L441.5 679.4L442.5 679.3L443.5 679.2L444.5 679.1L445.5 679.1L446.5 679.0L447.5 678.9L448.5 678.9L449.5 678.8L450.5 678.8L451.5 678.8L452.5 678.8L453.5 678.8L454.5 678.8L455.5 678.8L456.5 678.8L457.5 678.8L458.5 678.9L459.5 678.9L460.5 679.0L461.5 679.1L462.5 679.1L463.5 679.2L464.5 679.3L465.5 679.4L466.5 679.5L467.5 679.7L468.5 679.8L469.5 679.9L470.5 680.1L471.5 680.2L472.5 680.4L473.5 680.6L474.5 680.7L475.5 680.9L476.5 681.1L477.5 681.3L478.5 681.5L479.5 681.8L480.5 682.0L481.5 682.2L482.5 682.5L483.5 682.7L484.5 683.0L485.5 683.3L486.5 683.5L487.5 683.8L488.5 684.1L489.5 684.4L490.5 684.7L491.5 685.0L492.5 685.3L493.5 685.6L494.5 685.9L495.5 686.3L496.5 686.6L497.5 686.9L498.5 687.3L499.5 687.6L500.5 688.0L501.5 688.3L502.5 688.7L503.5 689.0L504.5 689.4L505.5 689.8L506.5 690.2L507.5 690.5L508.5 690.9L509.5 691.3L510.5 691.7L511.5 692.0L512.5 692.4L513.5 692.8L514.5 693.2L515.5 693.6L516.5 693.9L517.5 694.3L518.5 694.7L519.5 695.1L520.5 695.4L521.5 695.8L522.5 696.1L523.5 696.5L524.5 696.8L525.5 697.1L526.5 697.5L527.5 697.8L528.5 698.1L529.5 698.4L530.5 698.6L531.5 698.9L532.5 699.1L533.5 699.4L534.5 699.6L535.5 699.8L536.5 700.0L537.5 700.2L538.5 700.4L539.5 700.5L540.5 700.7L541.5 700.8L542.5 701.0L543.5 701.1L544.5 701.2L545.5 701.3L546.5 701.4L547.5 701.5L548.5 701.6L549.5 701.6L550.5 701.7L551.5 701.8L552.5 701.8L553.5 701.9L554.5 701.9L555.5 702.0L556.5 702.0L557.5 702.1L558.5 702.1L559.5 702.2L560.5 702.2L561.5 702.2L562.5 702.3L563.5 702.3L564.5 702.3L565.5 702.3L566.5 702.4L567.5 702.4L568.5 702.4L569.5 702.4L570.5 702.5L571.5 702.5L572.5 702.5L573.5 702.5L574.5 702.5L575.5 702.5L576.5 702.6L577.5 702.6L578.5 702.6L579.5 702.6L580.5 702.6L581.5 702.6L582.5 702.6L583.5 702.6L584.5 702.7L585.5 702.7L586.5 702.7L587.5 702.7L588.5 702.7L589.5 702.7L590.5 702.7L591.5 702.7L592.5 702.7L593.5 702.7L594.5 702.7L595.5 702.7L596.5 702.7L597.5 702.7L598.5 702.7L599.5 702.8L600.5 702.8L601.5 702.8L602.5 702.8L603.5 702.8L604.5 702.8L605.5 702.8L606.5 702.8L607.5 702.8L608.5 702.8L609.5 702.8L610.5 702.8L611.5 702.8L612.5 702.8L613.5 702.8L614.5 702.8L615.5 702.8L616.5 702.8L617.5 702.8L618.5 702.8L619.5 702.8L620.5 702.8L621.5 702.8L622.5 702.8L623.5 702.8L624.5 702.8L625.5 702.8L626.5 702.7L627.5 702.7L628.5 702.7L629.5 702.7L630.5 702.7L631.5 702.7L632.5 702.7L633.5 702.7L634.5 702.7L635.5 702.7L636.5 702.7L637.5 702.7L638.5 702.7L639.5 702.7L640.5 702.7L641.5 702.6L642.5 702.6L643.5 702.6L644.5 702.6L645.5 702.6L646.5 702.6L647.5 702.6L648.5 702.6L649.5 702.5L650.5 702.5L651.5 702.5L652.5 702.5L653.5 702.5L654.5 702.5L655.5 702.4L656.5 702.4L657.5 702.4L658.5 702.4L659.5 702.3L660.5 702.3L661.5 702.3L662.5 702.3L663.5 702.2L664.5 702.2L665.5 702.2L666.5 702.1L667.5 702.1L668.5 702.0L669.5 702.0L670.5 701.9L671.5 701.9L672.5 701.8L673.5 701.8L674.5 701.7L675.5 701.6L676.5 701.6L677.5 701.5L678.5 701.4L679.5 701.3L680.5 701.2L681.5 701.1L682.5 701.0L683.5 700.8L684.5 700.7L685.5 700.5L686.5 700.4L687.5 700.2L688.5 700.0L689.5 699.8L690.5 699.6L691.5 699.4L692.5 699.1L693.5 698.9L694.5 698.6L695.5 698.4L696.5 698.1L697.5 697.8L698.5 697.5L699.5 697.1L700.5 696.8L701.5 696.5L702.5 696.1L703.5 695.8L704.5 695.4L705.5 695.1L706.5 694.7L707.5 694.3L708.5 693.9L709.5 693.6L710.5 693.2L711.5 692.8L712.5 692.4L713.5 692.0L714.5 691.7L715.5 691.3L716.5 690.9L717.5 690.5L718.5 690.2L719.5 689.8L720.5 689.4L721.5 689.0L722.5 688.7L723.5 688.3L724.5 688.0L725.5 687.6L726.5 687.3L727.5 686.9L728.5 686.6L729.5 686.3L730.5 685.9L731.5 685.6L732.5 685.3L733.5 685.0L734.5 684.7L735.5 684.4L736.5 684.1L737.5 683.8L738.5 683.5L739.5 683.3L740.5 683.0L741.5 682.7L742.5 682.5L743.5 682.2L744.5 682.0L745.5 681.8L746.5 681.5L747.5 681.3L748.5 681.1L749.5 680.9L750.5 680.7L751.5 680.6L752.5 680.4L753.5 680.2L754.5 680.1L755.5 679.9L756.5 679.8L757.5 679.7L758.5 679.5L759.5 679.4L760.5 679.3L761.5 679.2L762.5 679.1L763.5 679.1L764.5 679.0L765.5 678.9L766.5 678.9L767.5 678.8L768.5 678.8L769.5 678.8L770.5 678.8L771.5 678.8L772.5 678.8L773.5 678.8L774.5 678.8L775.5 678.8L776.5 678.9L777.5 678.9L778.5 679.0L779.5 679.1L780.5 679.1L781.5 679.2L782.5 679.3L783.5 679.4L784.5 679.5L785.5 679.7L786.5 679.8L787.5 679.9L788.5 680.1L789.5 680.2L790.5 680.4L791.5 680.6L792.5 680.7L793.5 680.9L794.5 681.1L795.5 681.3L796.5 681.5L797.5 681.8L798.5 682.0L799.5 682.2L800.5 682.5L801.5 682.7L802.5 683.0L803.5 683.3L804.5 683.5L805.5 683.8L806.5 684.1L807.5 684.4L808.5 684.7L809.5 685.0L810.5 685.3L811.5 685.6L812.5 685.9L813.5 686.3L814.5 686.6L815.5 686.9L816.5 687.3L817.5 687.6L818.5 688.0L819.5 688.3L820.5 688.7L821.5 689.0L822.5 689.4L823.5 689.8L824.5 690.2L825.5 690.5L826.5 690.9L827.5 691.3L828.5 691.7L829.5 692.0L830.5 692.4L831.5 692.8L832.5 693.2L833.5 693.6L834.5 693.9L835.5 694.3L836.5 694.7L837.5 695.1L838.5 695.4L839.5 695.8L840.5 696.1L841.5 696.5L842.5 696.8L843.5 697.1L844.5 697.5L845.5 697.8L846.5 698.1L847.5 698.4L848.5 698.6L849.5 698.9L850.5 699.1L851.5 699.4L852.5 699.6L853.5 699.8L854.5 700.0L855.5 700.2L856.5 700.4L857.5 700.5L858.5 700.7L859.5 700.8L860.5 701.0L861.5 701.1L862.5 701.2L863.5 701.3L864.5 701.4L865.5 701.5L866.5 701.6L867.5 701.6L868.5 701.7L869.5 701.8L870.5 701.8L871.5 701.9L872.5 701.9L873.5 702.0L874.5 702.0L875.5 702.1L876.5 702.1L877.5 702.2L878.5 702.2L879.5 702.2L880.5 702.3L881.5 702.3L882.5 702.3L883.5 702.3L884.5 702.4L885.5 702.4L886.5 702.4L887.5 702.4L888.5 702.5L889.5 702.5L890.5 702.5L891.5 702.5L892.5 702.5L893.5 702.5L894.5 702.6L895.5 702.6L896.5 702.6L897.5 702.6L898.5 702.6L899.5 702.6L900.5 702.6L901.5 702.6L902.5 702.7L903.5 702.7L904.5 702.7L905.5 702.7L906.5 702.7L907.5 702.7L908.5 702.7L909.5 702.7L910.5 702.7L911.5 702.7L912.5 702.7L913.5 702.7L914.5 702.7L915.5 702.7L916.5 702.7L917.5 702.8L918.5 702.8L919.5 702.8L920.5 702.8L921.5 702.8L922.5 702.8L923.5 702.8L924.5 702.8L925.5 702.8L926.5 702.8L927.5 702.8L928.5 702.8L929.5 702.8L930.5 702.8L931.5 702.8L932.5 702.8L933.5 702.8L934.5 702.8L935.5 702.8L936.5 702.8L937.5 702.8L938.5 702.8L939.5 702.8L940.5 702.8L941.5 702.8L942.5 702.8L943.5 702.8L944.5 702.7L945.5 702.7L946.5 702.7L947.5 702.7L948.5 702.7L949.5 702.7L950.5 702.7L951.5 702.7L952.5 702.7L953.5 702.7L954.5 702.7L955.5 702.7L956.5 702.7L957.5 702.7L958.5 702.7L959.5 702.6L960.5 702.6L961.5 702.6L962.5 702.6L963.5 702.6L964.5 702.6L965.5 702.6L966.5 702.6L967.5 702.5L968.5 702.5L969.5 702.5L970.5 702.5L971.5 702.5L972.5 702.5L973.5 702.4L974.5 702.4L975.5 702.4L976.5 702.4L977.5 702.3L978.5 702.3L979.5 702.3L980.5 702.3L981.5 702.2L982.5 702.2L983.5 702.2L984.5 702.1L985.5 702.1L986.5 702.0L987.5 702.0L988.5 701.9L989.5 701.9L990.5 701.8L991.5 701.8L992.5 701.7L993.5 701.6L994.5 701.6L995.5 701.5L996.5 701.4L997.5 701.3L998.5 701.2L999.5 701.1L1000.5 701.0L1001.5 700.8L1002.5 700.7L1003.5 700.5L1004.5 700.4L1005.5 700.2L1006.5 700.0L1007.5 699.8L1008.5 699.6L1009.5 699.4L1010.5 699.1L1011.5 698.9L1012.5 698.6L1013.5 698.4L1014.5 698.1L1015.5 697.8L1016.5 697.5L1017.5 697.1L1018.5 696.8L1019.5 696.5L1020.5 696.1L1021.5 695.8L1022.5 695.4L1023.5 695.1L1024.5 694.7L1025.5 694.3L1026.5 693.9L1027.5 693.6L1028.5 693.2L1029.5 692.8L1030.5 692.4L1031.5 692.0L1032.5 691.7L1033.5 691.3L1034.5 690.9L1035.5 690.5L1036.5 690.2L1037.5 689.8L1038.5 689.4L1039.5 689.0L1040.5 688.7L1041.5 688.3L1042.5 688.0L1043.5 687.6L1044.5 687.3L1045.5 686.9L1046.5 686.6L1047.5 686.3L1048.5 685.9L1049.5 685.6L1050.5 685.3L1051.5 685.0L1052.5 684.7L1053.5 684.4L1054.5 684.1L1055.5 683.8L1056.5 683.5L1057.5 683.3L1058.5 683.0L1059.5 682.7L1060.5 682.5L1061.5 682.2L1062.5 682.0L1063.5 681.8L1064.5 681.5L1065.5 681.3L1066.5 681.1L1067.5 680.9L1068.5 680.7L1069.5 680.6L1070.5 680.4L1071.5 680.2L1072.5 680.1L1073.5 679.9L1074.5 679.8L1075.5 679.7L1076.5 679.5L1077.5 679.4L1078.5 679.3L1079.5 679.2L1080.5 679.1L1081.5 679.1L1082.5 679.0L1083.5 678.9L1084.5 678.9L1085.5 678.8L1086.5 678.8L1087.5 678.8L1088.5 678.8L1089.5 678.8L1090.5 678.8L1091.5 678.8L1092.5 678.8L1093.5 678.8L1094.5 678.9L1095.5 678.9L1096.5 679.0L1097.5 679.1L1098.5 679.1L1099.5 679.2L1100.5 679.3L1101.5 679.4L1102.5 679.5L1103.5 679.7L1104.5 679.8L1105.5 679.9L1106.5 680.1L1107.5 680.2L1108.5 680.4L1109.5 680.6L1110.5 680.7L1111.5 680.9L1112.5 681.1L1113.5 681.3L1114.5 681.5L1115.5 681.8L1116.5 682.0L1117.5 682.2L1118.5 682.5L1119.5 682.7L1120.5 683.0L1121.5 683.3L1122.5 683.5L1123.5 683.8L1124.5 684.1L1125.5 684.4L1126.5 684.7L1127.5 685.0L1128.5 685.3L1129.5 685.6L1130.5 685.9L1131.5 686.3L1132.5 686.6L1133.5 686.9L1134.5 687.3L1135.5 687.6L1136.5 688.0L1137.5 688.3L1138.5 688.7L1139.5 689.0L1140.5 689.4L1141.5 689.8L1142.5 690.2L1143.5 690.5L1144.5 690.9L1145.5 691.3L1146.5 691.7L1147.5 692.0L1148.5 692.4L1149.5 692.8L1150.5 693.2L1151.5 693.6L1152.5 693.9L1153.5 694.3L1154.5 694.7L1155.5 695.1L1156.5 695.4L1157.5 695.8L1158.5 696.1L1159.5 696.5L1160.5 696.8L1161.5 697.1L1162.5 697.5L1163.5 697.8L1164.5 698.1L1165.5 698.4L1166.5 698.6L1167.5 698.9L1168.5 699.1L1169.5 699.4L1170.5 699.6L1171.5 699.8L1172.5 700.0L1173.5 700.2L1174.5 700.4L1175.5 700.5L1176.5 700.7L1177.5 700.8L1178.5 701.0L1179.5 701.1L1180.5 701.2L1181.5 701.3L1182.5 701.4L1183.5 701.5L1184.5 701.6L1185.5 701.6L1186.5 701.7L1187.5 701.8L1188.5 701.8L1189.5 701.9L1190.5 701.9L1191.5 702.0L1192.5 702.0L1193.5 702.1L1194.5 702.1L1195.5 702.2L1196.5 702.2L1197.5 702.2L1198.5 702.3L1199.5 702.3L1200.5 702.3L1201.5 702.3L1202.5 702.4L1203.5 702.4L1204.5 702.4L1205.5 702.4L1206.5 702.5L1207.5 702.5L1208.5 702.5L1209.5 702.5L1210.5 702.5L1211.5 702.5L1212.5 702.6L1213.5 702.6L1214.5 702.6L1215.5 702.6L1216.5 702.6L1217.5 702.6L1218.5 702.6L1219.5 702.6L1220.5 702.7L1221.5 702.7L1222.5 702.7L1223.5 702.7L1224.5 702.7L1225.5 702.7L1226.5 702.7L1227.5 702.7L1228.5 702.7L1229.5 702.7L1230.5 702.7L1231.5 702.7L1232.5 702.7L1233.5 702.7L1234.5 702.7L1235.5 702.8L1236.5 702.8L1237.5 702.8L1238.5 702.8L1239.5 702.8L1240.5 702.8L1241.5 702.8L1242.5 702.8L1243.5 702.8L1244.5 702.8L1245.5 702.8L1246.5 702.8L1247.5 702.8L1248.5 702.8" stroke="#f4f432" stroke-width="1.9" fill="none" stroke-linejoin="round"/>
<path d="M294.5 707.7L295.5 707.7L296.5 707.7L297.5 707.7L298.5 707.7L299.5 707.7L300.5 707.7L301.5 707.7L302.5 707.7L303.5 707.7L304.5 707.7L305.5 707.7L306.5 707.7L307.5 707.7L308.5 707.7L309.5 707.7L310.5 707.7L311.5 707.7L312.5 707.7L313.5 707.7L314.5 707.7L315.5 707.7L316.5 707.7L317.5 707.7L318.5 707.7L319.5 707.7L320.5 707.7L321.5 707.7L322.5 707.7L323.5 707.7L324.5 707.7L325.5 707.7L326.5 707.7L327.5 707.7L328.5 707.7L329.5 707.7L330.5 707.7L331.5 707.7L332.5 707.7L333.5 707.7L334.5 707.7L335.5 707.7L336.5 707.7L337.5 707.7L338.5 707.7L339.5 707.7L340.5 707.7L341.5 707.7L342.5 707.7L343.5 707.7L344.5 707.7L345.5 707.7L346.5 707.7L347.5 707.7L348.5 707.7L349.5 707.7L350.5 707.7L351.5 707.7L352.5 707.7L353.5 707.7L354.5 707.7L355.5 707.7L356.5 707.7L357.5 707.7L358.5 707.7L359.5 707.7L360.5 707.7L361.5 707.7L362.5 707.7L363.5 707.7L364.5 707.7L365.5 707.7L366.5 707.7L367.5 707.7L368.5 707.7L369.5 707.7L370.5 707.7L371.5 707.7L372.5 707.7L373.5 707.7L374.0 707.7L374.5 707.6L375.5 707.4L376.5 707.2L377.5 707.0L378.5 706.8L379.5 706.6L380.5 706.5L381.5 706.3L382.5 706.2L383.5 706.0L384.5 705.9L385.5 705.8L386.5 705.7L387.5 705.6L388.5 705.5L389.5 705.4L390.5 705.4L391.5 705.3L392.5 705.2L393.5 705.2L394.5 705.1L395.5 705.1L396.5 705.0L397.5 705.0L398.5 704.9L399.5 704.9L400.5 704.8L401.5 704.8L402.5 704.8L403.5 704.7L404.5 704.7L405.5 704.7L406.5 704.7L407.5 704.6L408.5 704.6L409.5 704.6L410.5 704.6L411.5 704.5L412.5 704.5L413.5 704.5L414.5 704.5L415.5 704.5L416.5 704.5L417.5 704.4L418.5 704.4L419.5 704.4L420.5 704.4L421.5 704.4L422.5 704.4L423.5 704.4L424.5 704.4L425.5 704.3L426.5 704.3L427.5 704.3L428.5 704.3L429.5 704.3L430.5 704.3L431.5 704.3L432.5 704.3L433.5 704.3L434.5 704.3L435.5 704.3L436.5 704.3L437.5 704.3L438.5 704.3L439.5 704.3L440.5 704.2L441.5 704.2L442.5 704.2L443.5 704.2L444.5 704.2L445.5 704.2L446.5 704.2L447.5 704.2L448.5 704.2L449.5 704.2L450.5 704.2L451.5 704.2L452.5 704.2L453.5 704.2L454.5 704.2L455.5 704.2L456.5 704.2L457.5 704.2L458.5 704.2L459.5 704.2L460.5 704.2L461.5 704.2L462.5 704.2L463.5 704.2L464.5 704.2L465.5 704.2L466.5 704.2L467.5 704.3L468.5 704.3L469.5 704.3L470.5 704.3L471.5 704.3L472.5 704.3L473.5 704.3L474.5 704.3L475.5 704.3L476.5 704.3L477.5 704.3L478.5 704.3L479.5 704.3L480.5 704.3L481.5 704.3L482.5 704.4L483.5 704.4L484.5 704.4L485.5 704.4L486.5 704.4L487.5 704.4L488.5 704.4L489.5 704.4L490.5 704.5L491.5 704.5L492.5 704.5L493.5 704.5L494.5 704.5L495.5 704.5L496.5 704.6L497.5 704.6L498.5 704.6L499.5 704.6L500.5 704.7L501.5 704.7L502.5 704.7L503.5 704.7L504.5 704.8L505.5 704.8L506.5 704.8L507.5 704.9L508.5 704.9L509.5 705.0L510.5 705.0L511.5 705.1L512.5 705.1L513.5 705.2L514.5 705.2L515.5 705.3L516.5 705.4L517.5 705.4L518.5 705.5L519.5 705.6L520.5 705.7L521.5 705.8L522.5 705.9L523.5 706.0L524.5 706.2L525.5 706.3L526.5 706.5L527.5 706.6L528.5 706.8L529.5 707.0L530.5 707.2L531.5 707.4L532.5 707.6L533.5 707.9L534.5 708.1L535.5 708.4L536.5 708.6L537.5 708.9L538.5 709.2L539.5 709.5L540.5 709.9L541.5 710.2L542.5 710.5L543.5 710.9L544.5 711.2L545.5 711.6L546.5 711.9L547.5 712.3L548.5 712.7L549.5 713.1L550.5 713.4L551.5 713.8L552.5 714.2L553.5 714.6L554.5 715.0L555.5 715.3L556.5 715.7L557.5 716.1L558.5 716.5L559.5 716.8L560.5 717.2L561.5 717.6L562.5 718.0L563.5 718.3L564.5 718.7L565.5 719.0L566.5 719.4L567.5 719.7L568.5 720.1L569.5 720.4L570.5 720.7L571.5 721.1L572.5 721.4L573.5 721.7L574.5 722.0L575.5 722.3L576.5 722.6L577.5 722.9L578.5 723.2L579.5 723.5L580.5 723.7L581.5 724.0L582.5 724.3L583.5 724.5L584.5 724.8L585.5 725.0L586.5 725.2L587.5 725.5L588.5 725.7L589.5 725.9L590.5 726.1L591.5 726.3L592.5 726.4L593.5 726.6L594.5 726.8L595.5 726.9L596.5 727.1L597.5 727.2L598.5 727.3L599.5 727.5L600.5 727.6L601.5 727.7L602.5 727.8L603.5 727.9L604.5 727.9L605.5 728.0L606.5 728.1L607.5 728.1L608.5 728.2L609.5 728.2L610.5 728.2L611.5 728.2L612.5 728.2L613.5 728.2L614.5 728.2L615.5 728.2L616.5 728.2L617.5 728.1L618.5 728.1L619.5 728.0L620.5 727.9L621.5 727.9L622.5 727.8L623.5 727.7L624.5 727.6L625.5 727.5L626.5 727.3L627.5 727.2L628.5 727.1L629.5 726.9L630.5 726.8L631.5 726.6L632.5 726.4L633.5 726.3L634.5 726.1L635.5 725.9L636.5 725.7L637.5 725.5L638.5 725.2L639.5 725.0L640.5 724.8L641.5 724.5L642.5 724.3L643.5 724.0L644.5 723.7L645.5 723.5L646.5 723.2L647.5 722.9L648.5 722.6L649.5 722.3L650.5 722.0L651.5 721.7L652.5 721.4L653.5 721.1L654.5 720.7L655.5 720.4L656.5 720.1L657.5 719.7L658.5 719.4L659.5 719.0L660.5 718.7L661.5 718.3L662.5 718.0L663.5 717.6L664.5 717.2L665.5 716.8L666.5 716.5L667.5 716.1L668.5 715.7L669.5 715.3L670.5 715.0L671.5 714.6L672.5 714.2L673.5 713.8L674.5 713.4L675.5 713.1L676.5 712.7L677.5 712.3L678.5 711.9L679.5 711.6L680.5 711.2L681.5 710.9L682.5 710.5L683.5 710.2L684.5 709.9L685.5 709.5L686.5 709.2L687.5 708.9L688.5 708.6L689.5 708.4L690.5 708.1L691.5 707.9L692.5 707.6L693.5 707.4L694.5 707.2L695.5 707.0L696.5 706.8L697.5 706.6L698.5 706.5L699.5 706.3L700.5 706.2L701.5 706.0L702.5 705.9L703.5 705.8L704.5 705.7L705.5 705.6L706.5 705.5L707.5 705.4L708.5 705.4L709.5 705.3L710.5 705.2L711.5 705.2L712.5 705.1L713.5 705.1L714.5 705.0L715.5 705.0L716.5 704.9L717.5 704.9L718.5 704.8L719.5 704.8L720.5 704.8L721.5 704.7L722.5 704.7L723.5 704.7L724.5 704.7L725.5 704.6L726.5 704.6L727.5 704.6L728.5 704.6L729.5 704.5L730.5 704.5L731.5 704.5L732.5 704.5L733.5 704.5L734.5 704.5L735.5 704.4L736.5 704.4L737.5 704.4L738.5 704.4L739.5 704.4L740.5 704.4L741.5 704.4L742.5 704.4L743.5 704.3L744.5 704.3L745.5 704.3L746.5 704.3L747.5 704.3L748.5 704.3L749.5 704.3L750.5 704.3L751.5 704.3L752.5 704.3L753.5 704.3L754.5 704.3L755.5 704.3L756.5 704.3L757.5 704.3L758.5 704.2L759.5 704.2L760.5 704.2L761.5 704.2L762.5 704.2L763.5 704.2L764.5 704.2L765.5 704.2L766.5 704.2L767.5 704.2L768.5 704.2L769.5 704.2L770.5 704.2L771.5 704.2L772.5 704.2L773.5 704.2L774.5 704.2L775.5 704.2L776.5 704.2L777.5 704.2L778.5 704.2L779.5 704.2L780.5 704.2L781.5 704.2L782.5 704.2L783.5 704.2L784.5 704.2L785.5 704.3L786.5 704.3L787.5 704.3L788.5 704.3L789.5 704.3L790.5 704.3L791.5 704.3L792.5 704.3L793.5 704.3L794.5 704.3L795.5 704.3L796.5 704.3L797.5 704.3L798.5 704.3L799.5 704.3L800.5 704.4L801.5 704.4L802.5 704.4L803.5 704.4L804.5 704.4L805.5 704.4L806.5 704.4L807.5 704.4L808.5 704.5L809.5 704.5L810.5 704.5L811.5 704.5L812.5 704.5L813.5 704.5L814.5 704.6L815.5 704.6L816.5 704.6L817.5 704.6L818.5 704.7L819.5 704.7L820.5 704.7L821.5 704.7L822.5 704.8L823.5 704.8L824.5 704.8L825.5 704.9L826.5 704.9L827.5 705.0L828.5 705.0L829.5 705.1L830.5 705.1L831.5 705.2L832.5 705.2L833.5 705.3L834.5 705.4L835.5 705.4L836.5 705.5L837.5 705.6L838.5 705.7L839.5 705.8L840.5 705.9L841.5 706.0L842.5 706.2L843.5 706.3L844.5 706.5L845.5 706.6L846.5 706.8L847.5 707.0L848.5 707.2L849.5 707.4L850.5 707.6L851.5 707.9L852.5 708.1L853.5 708.4L854.5 708.6L855.5 708.9L856.5 709.2L857.5 709.5L858.5 709.9L859.5 710.2L860.5 710.5L861.5 710.9L862.5 711.2L863.5 711.6L864.5 711.9L865.5 712.3L866.5 712.7L867.5 713.1L868.5 713.4L869.5 713.8L870.5 714.2L871.5 714.6L872.5 715.0L873.5 715.3L874.5 715.7L875.5 716.1L876.5 716.5L877.5 716.8L878.5 717.2L879.5 717.6L880.5 718.0L881.5 718.3L882.5 718.7L883.5 719.0L884.5 719.4L885.5 719.7L886.5 720.1L887.5 720.4L888.5 720.7L889.5 721.1L890.5 721.4L891.5 721.7L892.5 722.0L893.5 722.3L894.5 722.6L895.5 722.9L896.5 723.2L897.5 723.5L898.5 723.7L899.5 724.0L900.5 724.3L901.5 724.5L902.5 724.8L903.5 725.0L904.5 725.2L905.5 725.5L906.5 725.7L907.5 725.9L908.5 726.1L909.5 726.3L910.5 726.4L911.5 726.6L912.5 726.8L913.5 726.9L914.5 727.1L915.5 727.2L916.5 727.3L917.5 727.5L918.5 727.6L919.5 727.7L920.5 727.8L921.5 727.9L922.5 727.9L923.5 728.0L924.5 728.1L925.5 728.1L926.5 728.2L927.5 728.2L928.5 728.2L929.5 728.2L930.5 728.2L931.5 728.2L932.5 728.2L933.5 728.2L934.5 728.2L935.5 728.1L936.5 728.1L937.5 728.0L938.5 727.9L939.5 727.9L940.5 727.8L941.5 727.7L942.5 727.6L943.5 727.5L944.5 727.3L945.5 727.2L946.5 727.1L947.5 726.9L948.5 726.8L949.5 726.6L950.5 726.4L951.5 726.3L952.5 726.1L953.5 725.9L954.5 725.7L955.5 725.5L956.5 725.2L957.5 725.0L958.5 724.8L959.5 724.5L960.5 724.3L961.5 724.0L962.5 723.7L963.5 723.5L964.5 723.2L965.5 722.9L966.5 722.6L967.5 722.3L968.5 722.0L969.5 721.7L970.5 721.4L971.5 721.1L972.5 720.7L973.5 720.4L974.5 720.1L975.5 719.7L976.5 719.4L977.5 719.0L978.5 718.7L979.5 718.3L980.5 718.0L981.5 717.6L982.5 717.2L983.5 716.8L984.5 716.5L985.5 716.1L986.5 715.7L987.5 715.3L988.5 715.0L989.5 714.6L990.5 714.2L991.5 713.8L992.5 713.4L993.5 713.1L994.5 712.7L995.5 712.3L996.5 711.9L997.5 711.6L998.5 711.2L999.5 710.9L1000.5 710.5L1001.5 710.2L1002.5 709.9L1003.5 709.5L1004.5 709.2L1005.5 708.9L1006.5 708.6L1007.5 708.4L1008.5 708.1L1009.5 707.9L1010.5 707.6L1011.5 707.4L1012.5 707.2L1013.5 707.0L1014.5 706.8L1015.5 706.6L1016.5 706.5L1017.5 706.3L1018.5 706.2L1019.5 706.0L1020.5 705.9L1021.5 705.8L1022.5 705.7L1023.5 705.6L1024.5 705.5L1025.5 705.4L1026.5 705.4L1027.5 705.3L1028.5 705.2L1029.5 705.2L1030.5 705.1L1031.5 705.1L1032.5 705.0L1033.5 705.0L1034.5 704.9L1035.5 704.9L1036.5 704.8L1037.5 704.8L1038.5 704.8L1039.5 704.7L1040.5 704.7L1041.5 704.7L1042.5 704.7L1043.5 704.6L1044.5 704.6L1045.5 704.6L1046.5 704.6L1047.5 704.5L1048.5 704.5L1049.5 704.5L1050.5 704.5L1051.5 704.5L1052.5 704.5L1053.5 704.4L1054.5 704.4L1055.5 704.4L1056.5 704.4L1057.5 704.4L1058.5 704.4L1059.5 704.4L1060.5 704.4L1061.5 704.3L1062.5 704.3L1063.5 704.3L1064.5 704.3L1065.5 704.3L1066.5 704.3L1067.5 704.3L1068.5 704.3L1069.5 704.3L1070.5 704.3L1071.5 704.3L1072.5 704.3L1073.5 704.3L1074.5 704.3L1075.5 704.3L1076.5 704.2L1077.5 704.2L1078.5 704.2L1079.5 704.2L1080.5 704.2L1081.5 704.2L1082.5 704.2L1083.5 704.2L1084.5 704.2L1085.5 704.2L1086.5 704.2L1087.5 704.2L1088.5 704.2L1089.5 704.2L1090.5 704.2L1091.5 704.2L1092.5 704.2L1093.5 704.2L1094.5 704.2L1095.5 704.2L1096.5 704.2L1097.5 704.2L1098.5 704.2L1099.5 704.2L1100.5 704.2L1101.5 704.2L1102.5 704.2L1103.5 704.3L1104.5 704.3L1105.5 704.3L1106.5 704.3L1107.5 704.3L1108.5 704.3L1109.5 704.3L1110.5 704.3L1111.5 704.3L1112.5 704.3L1113.5 704.3L1114.5 704.3L1115.5 704.3L1116.5 704.3L1117.5 704.3L1118.5 704.4L1119.5 704.4L1120.5 704.4L1121.5 704.4L1122.5 704.4L1123.5 704.4L1124.5 704.4L1125.5 704.4L1126.5 704.5L1127.5 704.5L1128.5 704.5L1129.5 704.5L1130.5 704.5L1131.5 704.5L1132.5 704.6L1133.5 704.6L1134.5 704.6L1135.5 704.6L1136.5 704.7L1137.5 704.7L1138.5 704.7L1139.5 704.7L1140.5 704.8L1141.5 704.8L1142.5 704.8L1143.5 704.9L1144.5 704.9L1145.5 705.0L1146.5 705.0L1147.5 705.1L1148.5 705.1L1149.5 705.2L1150.5 705.2L1151.5 705.3L1152.5 705.4L1153.5 705.4L1154.5 705.5L1155.5 705.6L1156.5 705.7L1157.5 705.8L1158.5 705.9L1159.5 706.0L1160.5 706.2L1161.5 706.3L1162.5 706.5L1163.5 706.6L1164.5 706.8L1165.5 707.0L1166.5 707.2L1167.5 707.4L1168.5 707.6L1169.5 707.9L1170.5 708.1L1171.5 708.4L1172.5 708.6L1173.5 708.9L1174.5 709.2L1175.5 709.5L1176.5 709.9L1177.5 710.2L1178.5 710.5L1179.5 710.9L1180.5 711.2L1181.5 711.6L1182.5 711.9L1183.5 712.3L1184.5 712.7L1185.5 713.1L1186.5 713.4L1187.5 713.8L1188.5 714.2L1189.5 714.6L1190.5 715.0L1191.5 715.3L1192.5 715.7L1193.5 716.1L1194.5 716.5L1195.5 716.8L1196.5 717.2L1197.5 717.6L1198.5 718.0L1199.5 718.3L1200.5 718.7L1201.5 719.0L1202.5 719.4L1203.5 719.7L1204.5 720.1L1205.5 720.4L1206.5 720.7L1207.5 721.1L1208.5 721.4L1209.5 721.7L1210.5 722.0L1211.5 722.3L1212.5 722.6L1213.5 722.9L1214.5 723.2L1215.5 723.5L1216.5 723.7L1217.5 724.0L1218.5 724.3L1219.5 724.5L1220.5 724.8L1221.5 725.0L1222.5 725.2L1223.5 725.5L1224.5 725.7L1225.5 725.9L1226.5 726.1L1227.5 726.3L1228.5 726.4L1229.5 726.6L1230.5 726.8L1231.5 726.9L1232.5 727.1L1233.5 727.2L1234.5 727.3L1235.5 727.5L1236.5 727.6L1237.5 727.7L1238.5 727.8L1239.5 727.9L1240.5 727.9L1241.5 728.0L1242.5 728.1L1243.5 728.1L1244.5 728.2L1245.5 728.2L1246.5 728.2L1247.5 728.2L1248.5 728.2" stroke="#34e2ee" stroke-width="1.9" fill="none" stroke-linejoin="round"/>
<path d="M294.5 703.5L295.5 703.5L296.5 703.5L297.5 703.5L298.5 703.5L299.5 703.5L300.5 703.5L301.5 703.5L302.5 703.5L303.5 703.5L304.5 703.5L305.5 703.5L306.5 703.5L307.5 703.5L308.5 703.5L309.5 703.5L310.5 703.5L311.5 703.5L312.5 703.5L313.5 703.5L314.5 703.5L315.5 703.5L316.5 703.5L317.5 703.5L318.5 703.5L319.5 703.5L320.5 703.5L321.5 703.5L322.5 703.5L323.5 703.5L324.5 703.5L325.5 703.5L326.5 703.5L327.5 703.5L328.5 703.5L329.5 703.5L330.5 703.5L331.5 703.5L332.5 703.5L333.5 703.5L334.5 703.5L335.5 703.5L336.5 703.5L337.5 703.5L338.5 703.5L339.5 703.5L340.5 703.5L341.5 703.5L342.5 703.5L343.5 703.5L344.5 703.5L345.5 703.5L346.5 703.5L347.5 703.5L348.5 703.5L349.5 703.5L350.5 703.5L351.5 703.5L352.5 703.5L353.5 703.5L354.5 703.5L355.5 703.5L356.5 703.5L357.5 703.5L358.5 703.5L359.5 703.5L360.5 703.5L361.5 703.5L362.5 703.5L363.5 703.5L364.5 703.5L365.5 703.5L366.5 703.5L367.5 703.5L368.5 703.5L369.5 703.5L370.5 703.5L371.5 703.5L372.5 703.5L373.5 703.5L374.0 703.5L374.5 701.6L375.5 697.8L376.5 694.0L377.5 690.2L378.5 686.4L379.5 682.7L380.5 678.9L381.5 675.1L382.5 671.4L383.5 667.7L384.5 663.9L385.5 660.2L386.5 656.5L387.5 652.9L388.5 649.2L389.5 645.6L390.5 642.0L391.5 638.4L392.5 634.9L393.5 631.3L394.5 627.8L395.5 624.3L396.5 620.9L397.5 617.5L398.5 614.1L399.5 610.8L400.5 607.5L401.5 604.2L402.5 601.0L403.5 597.8L404.5 594.6L405.5 591.5L406.5 588.5L407.5 585.5L408.5 582.5L409.5 579.6L410.5 576.7L411.5 573.9L412.5 571.1L413.5 568.4L414.5 565.7L415.5 563.1L416.5 560.5L417.5 558.0L418.5 555.6L419.5 553.2L420.5 550.9L421.5 548.6L422.5 546.4L423.5 544.2L424.5 542.1L425.5 540.1L426.5 538.1L427.5 536.2L428.5 534.4L429.5 532.6L430.5 530.9L431.5 529.3L432.5 527.8L433.5 526.3L434.5 524.8L435.5 523.5L436.5 522.2L437.5 521.0L438.5 519.8L439.5 518.8L440.5 517.8L441.5 516.8L442.5 516.0L443.5 515.2L444.5 514.5L445.5 513.8L446.5 513.3L447.5 512.8L448.5 512.4L449.5 512.1L450.5 511.8L451.5 511.6L452.5 511.5L453.5 511.5L454.5 511.5L455.5 511.6L456.5 511.8L457.5 512.1L458.5 512.4L459.5 512.8L460.5 513.3L461.5 513.8L462.5 514.5L463.5 515.2L464.5 516.0L465.5 516.8L466.5 517.8L467.5 518.8L468.5 519.8L469.5 521.0L470.5 522.2L471.5 523.5L472.5 524.8L473.5 526.3L474.5 527.8L475.5 529.3L476.5 530.9L477.5 532.6L478.5 534.4L479.5 536.2L480.5 538.1L481.5 540.1L482.5 542.1L483.5 544.2L484.5 546.4L485.5 548.6L486.5 550.9L487.5 553.2L488.5 555.6L489.5 558.0L490.5 560.5L491.5 563.1L492.5 565.7L493.5 568.4L494.5 571.1L495.5 573.9L496.5 576.7L497.5 579.6L498.5 582.5L499.5 585.5L500.5 588.5L501.5 591.5L502.5 594.6L503.5 597.8L504.5 601.0L505.5 604.2L506.5 607.5L507.5 610.8L508.5 614.1L509.5 617.5L510.5 620.9L511.5 624.3L512.5 627.8L513.5 631.3L514.5 634.9L515.5 638.4L516.5 642.0L517.5 645.6L518.5 649.2L519.5 652.9L520.5 656.5L521.5 660.2L522.5 663.9L523.5 667.7L524.5 671.4L525.5 675.1L526.5 678.9L527.5 682.7L528.5 686.4L529.5 690.2L530.5 694.0L531.5 697.8L532.5 701.6L533.5 705.4L534.5 709.2L535.5 713.0L536.5 716.8L537.5 720.6L538.5 724.3L539.5 728.1L540.5 731.9L541.5 735.6L542.5 739.3L543.5 743.1L544.5 746.8L545.5 750.5L546.5 754.1L547.5 757.8L548.5 761.4L549.5 765.0L550.5 768.6L551.5 772.1L552.5 775.7L553.5 779.2L554.5 782.7L555.5 786.1L556.5 789.5L557.5 792.9L558.5 796.2L559.5 799.5L560.5 802.8L561.5 806.0L562.5 809.2L563.5 812.4L564.5 815.5L565.5 818.5L566.5 821.5L567.5 824.5L568.5 827.4L569.5 830.3L570.5 833.1L571.5 835.9L572.5 838.6L573.5 841.3L574.5 843.9L575.5 846.5L576.5 849.0L577.5 851.4L578.5 853.8L579.5 856.1L580.5 858.4L581.5 860.6L582.5 862.8L583.5 864.9L584.5 866.9L585.5 868.9L586.5 870.8L587.5 872.6L588.5 874.4L589.5 876.1L590.5 877.7L591.5 879.2L592.5 880.7L593.5 882.2L594.5 883.5L595.5 884.8L596.5 886.0L597.5 887.2L598.5 888.2L599.5 889.2L600.5 890.2L601.5 891.0L602.5 891.8L603.5 892.5L604.5 893.2L605.5 893.7L606.5 894.2L607.5 894.6L608.5 894.9L609.5 895.2L610.5 895.4L611.5 895.5L612.5 895.5L613.5 895.5L614.5 895.4L615.5 895.2L616.5 894.9L617.5 894.6L618.5 894.2L619.5 893.7L620.5 893.2L621.5 892.5L622.5 891.8L623.5 891.0L624.5 890.2L625.5 889.2L626.5 888.2L627.5 887.2L628.5 886.0L629.5 884.8L630.5 883.5L631.5 882.2L632.5 880.7L633.5 879.2L634.5 877.7L635.5 876.1L636.5 874.4L637.5 872.6L638.5 870.8L639.5 868.9L640.5 866.9L641.5 864.9L642.5 862.8L643.5 860.6L644.5 858.4L645.5 856.1L646.5 853.8L647.5 851.4L648.5 849.0L649.5 846.5L650.5 843.9L651.5 841.3L652.5 838.6L653.5 835.9L654.5 833.1L655.5 830.3L656.5 827.4L657.5 824.5L658.5 821.5L659.5 818.5L660.5 815.5L661.5 812.4L662.5 809.2L663.5 806.0L664.5 802.8L665.5 799.5L666.5 796.2L667.5 792.9L668.5 789.5L669.5 786.1L670.5 782.7L671.5 779.2L672.5 775.7L673.5 772.1L674.5 768.6L675.5 765.0L676.5 761.4L677.5 757.8L678.5 754.1L679.5 750.5L680.5 746.8L681.5 743.1L682.5 739.3L683.5 735.6L684.5 731.9L685.5 728.1L686.5 724.3L687.5 720.6L688.5 716.8L689.5 713.0L690.5 709.2L691.5 705.4L692.5 701.6L693.5 697.8L694.5 694.0L695.5 690.2L696.5 686.4L697.5 682.7L698.5 678.9L699.5 675.1L700.5 671.4L701.5 667.7L702.5 663.9L703.5 660.2L704.5 656.5L705.5 652.9L706.5 649.2L707.5 645.6L708.5 642.0L709.5 638.4L710.5 634.9L711.5 631.3L712.5 627.8L713.5 624.3L714.5 620.9L715.5 617.5L716.5 614.1L717.5 610.8L718.5 607.5L719.5 604.2L720.5 601.0L721.5 597.8L722.5 594.6L723.5 591.5L724.5 588.5L725.5 585.5L726.5 582.5L727.5 579.6L728.5 576.7L729.5 573.9L730.5 571.1L731.5 568.4L732.5 565.7L733.5 563.1L734.5 560.5L735.5 558.0L736.5 555.6L737.5 553.2L738.5 550.9L739.5 548.6L740.5 546.4L741.5 544.2L742.5 542.1L743.5 540.1L744.5 538.1L745.5 536.2L746.5 534.4L747.5 532.6L748.5 530.9L749.5 529.3L750.5 527.8L751.5 526.3L752.5 524.8L753.5 523.5L754.5 522.2L755.5 521.0L756.5 519.8L757.5 518.8L758.5 517.8L759.5 516.8L760.5 516.0L761.5 515.2L762.5 514.5L763.5 513.8L764.5 513.3L765.5 512.8L766.5 512.4L767.5 512.1L768.5 511.8L769.5 511.6L770.5 511.5L771.5 511.5L772.5 511.5L773.5 511.6L774.5 511.8L775.5 512.1L776.5 512.4L777.5 512.8L778.5 513.3L779.5 513.8L780.5 514.5L781.5 515.2L782.5 516.0L783.5 516.8L784.5 517.8L785.5 518.8L786.5 519.8L787.5 521.0L788.5 522.2L789.5 523.5L790.5 524.8L791.5 526.3L792.5 527.8L793.5 529.3L794.5 530.9L795.5 532.6L796.5 534.4L797.5 536.2L798.5 538.1L799.5 540.1L800.5 542.1L801.5 544.2L802.5 546.4L803.5 548.6L804.5 550.9L805.5 553.2L806.5 555.6L807.5 558.0L808.5 560.5L809.5 563.1L810.5 565.7L811.5 568.4L812.5 571.1L813.5 573.9L814.5 576.7L815.5 579.6L816.5 582.5L817.5 585.5L818.5 588.5L819.5 591.5L820.5 594.6L821.5 597.8L822.5 601.0L823.5 604.2L824.5 607.5L825.5 610.8L826.5 614.1L827.5 617.5L828.5 620.9L829.5 624.3L830.5 627.8L831.5 631.3L832.5 634.9L833.5 638.4L834.5 642.0L835.5 645.6L836.5 649.2L837.5 652.9L838.5 656.5L839.5 660.2L840.5 663.9L841.5 667.7L842.5 671.4L843.5 675.1L844.5 678.9L845.5 682.7L846.5 686.4L847.5 690.2L848.5 694.0L849.5 697.8L850.5 701.6L851.5 705.4L852.5 709.2L853.5 713.0L854.5 716.8L855.5 720.6L856.5 724.3L857.5 728.1L858.5 731.9L859.5 735.6L860.5 739.3L861.5 743.1L862.5 746.8L863.5 750.5L864.5 754.1L865.5 757.8L866.5 761.4L867.5 765.0L868.5 768.6L869.5 772.1L870.5 775.7L871.5 779.2L872.5 782.7L873.5 786.1L874.5 789.5L875.5 792.9L876.5 796.2L877.5 799.5L878.5 802.8L879.5 806.0L880.5 809.2L881.5 812.4L882.5 815.5L883.5 818.5L884.5 821.5L885.5 824.5L886.5 827.4L887.5 830.3L888.5 833.1L889.5 835.9L890.5 838.6L891.5 841.3L892.5 843.9L893.5 846.5L894.5 849.0L895.5 851.4L896.5 853.8L897.5 856.1L898.5 858.4L899.5 860.6L900.5 862.8L901.5 864.9L902.5 866.9L903.5 868.9L904.5 870.8L905.5 872.6L906.5 874.4L907.5 876.1L908.5 877.7L909.5 879.2L910.5 880.7L911.5 882.2L912.5 883.5L913.5 884.8L914.5 886.0L915.5 887.2L916.5 888.2L917.5 889.2L918.5 890.2L919.5 891.0L920.5 891.8L921.5 892.5L922.5 893.2L923.5 893.7L924.5 894.2L925.5 894.6L926.5 894.9L927.5 895.2L928.5 895.4L929.5 895.5L930.5 895.5L931.5 895.5L932.5 895.4L933.5 895.2L934.5 894.9L935.5 894.6L936.5 894.2L937.5 893.7L938.5 893.2L939.5 892.5L940.5 891.8L941.5 891.0L942.5 890.2L943.5 889.2L944.5 888.2L945.5 887.2L946.5 886.0L947.5 884.8L948.5 883.5L949.5 882.2L950.5 880.7L951.5 879.2L952.5 877.7L953.5 876.1L954.5 874.4L955.5 872.6L956.5 870.8L957.5 868.9L958.5 866.9L959.5 864.9L960.5 862.8L961.5 860.6L962.5 858.4L963.5 856.1L964.5 853.8L965.5 851.4L966.5 849.0L967.5 846.5L968.5 843.9L969.5 841.3L970.5 838.6L971.5 835.9L972.5 833.1L973.5 830.3L974.5 827.4L975.5 824.5L976.5 821.5L977.5 818.5L978.5 815.5L979.5 812.4L980.5 809.2L981.5 806.0L982.5 802.8L983.5 799.5L984.5 796.2L985.5 792.9L986.5 789.5L987.5 786.1L988.5 782.7L989.5 779.2L990.5 775.7L991.5 772.1L992.5 768.6L993.5 765.0L994.5 761.4L995.5 757.8L996.5 754.1L997.5 750.5L998.5 746.8L999.5 743.1L1000.5 739.3L1001.5 735.6L1002.5 731.9L1003.5 728.1L1004.5 724.3L1005.5 720.6L1006.5 716.8L1007.5 713.0L1008.5 709.2L1009.5 705.4L1010.5 701.6L1011.5 697.8L1012.5 694.0L1013.5 690.2L1014.5 686.4L1015.5 682.7L1016.5 678.9L1017.5 675.1L1018.5 671.4L1019.5 667.7L1020.5 663.9L1021.5 660.2L1022.5 656.5L1023.5 652.9L1024.5 649.2L1025.5 645.6L1026.5 642.0L1027.5 638.4L1028.5 634.9L1029.5 631.3L1030.5 627.8L1031.5 624.3L1032.5 620.9L1033.5 617.5L1034.5 614.1L1035.5 610.8L1036.5 607.5L1037.5 604.2L1038.5 601.0L1039.5 597.8L1040.5 594.6L1041.5 591.5L1042.5 588.5L1043.5 585.5L1044.5 582.5L1045.5 579.6L1046.5 576.7L1047.5 573.9L1048.5 571.1L1049.5 568.4L1050.5 565.7L1051.5 563.1L1052.5 560.5L1053.5 558.0L1054.5 555.6L1055.5 553.2L1056.5 550.9L1057.5 548.6L1058.5 546.4L1059.5 544.2L1060.5 542.1L1061.5 540.1L1062.5 538.1L1063.5 536.2L1064.5 534.4L1065.5 532.6L1066.5 530.9L1067.5 529.3L1068.5 527.8L1069.5 526.3L1070.5 524.8L1071.5 523.5L1072.5 522.2L1073.5 521.0L1074.5 519.8L1075.5 518.8L1076.5 517.8L1077.5 516.8L1078.5 516.0L1079.5 515.2L1080.5 514.5L1081.5 513.8L1082.5 513.3L1083.5 512.8L1084.5 512.4L1085.5 512.1L1086.5 511.8L1087.5 511.6L1088.5 511.5L1089.5 511.5L1090.5 511.5L1091.5 511.6L1092.5 511.8L1093.5 512.1L1094.5 512.4L1095.5 512.8L1096.5 513.3L1097.5 513.8L1098.5 514.5L1099.5 515.2L1100.5 516.0L1101.5 516.8L1102.5 517.8L1103.5 518.8L1104.5 519.8L1105.5 521.0L1106.5 522.2L1107.5 523.5L1108.5 524.8L1109.5 526.3L1110.5 527.8L1111.5 529.3L1112.5 530.9L1113.5 532.6L1114.5 534.4L1115.5 536.2L1116.5 538.1L1117.5 540.1L1118.5 542.1L1119.5 544.2L1120.5 546.4L1121.5 548.6L1122.5 550.9L1123.5 553.2L1124.5 555.6L1125.5 558.0L1126.5 560.5L1127.5 563.1L1128.5 565.7L1129.5 568.4L1130.5 571.1L1131.5 573.9L1132.5 576.7L1133.5 579.6L1134.5 582.5L1135.5 585.5L1136.5 588.5L1137.5 591.5L1138.5 594.6L1139.5 597.8L1140.5 601.0L1141.5 604.2L1142.5 607.5L1143.5 610.8L1144.5 614.1L1145.5 617.5L1146.5 620.9L1147.5 624.3L1148.5 627.8L1149.5 631.3L1150.5 634.9L1151.5 638.4L1152.5 642.0L1153.5 645.6L1154.5 649.2L1155.5 652.9L1156.5 656.5L1157.5 660.2L1158.5 663.9L1159.5 667.7L1160.5 671.4L1161.5 675.1L1162.5 678.9L1163.5 682.7L1164.5 686.4L1165.5 690.2L1166.5 694.0L1167.5 697.8L1168.5 701.6L1169.5 705.4L1170.5 709.2L1171.5 713.0L1172.5 716.8L1173.5 720.6L1174.5 724.3L1175.5 728.1L1176.5 731.9L1177.5 735.6L1178.5 739.3L1179.5 743.1L1180.5 746.8L1181.5 750.5L1182.5 754.1L1183.5 757.8L1184.5 761.4L1185.5 765.0L1186.5 768.6L1187.5 772.1L1188.5 775.7L1189.5 779.2L1190.5 782.7L1191.5 786.1L1192.5 789.5L1193.5 792.9L1194.5 796.2L1195.5 799.5L1196.5 802.8L1197.5 806.0L1198.5 809.2L1199.5 812.4L1200.5 815.5L1201.5 818.5L1202.5 821.5L1203.5 824.5L1204.5 827.4L1205.5 830.3L1206.5 833.1L1207.5 835.9L1208.5 838.6L1209.5 841.3L1210.5 843.9L1211.5 846.5L1212.5 849.0L1213.5 851.4L1214.5 853.8L1215.5 856.1L1216.5 858.4L1217.5 860.6L1218.5 862.8L1219.5 864.9L1220.5 866.9L1221.5 868.9L1222.5 870.8L1223.5 872.6L1224.5 874.4L1225.5 876.1L1226.5 877.7L1227.5 879.2L1228.5 880.7L1229.5 882.2L1230.5 883.5L1231.5 884.8L1232.5 886.0L1233.5 887.2L1234.5 888.2L1235.5 889.2L1236.5 890.2L1237.5 891.0L1238.5 891.8L1239.5 892.5L1240.5 893.2L1241.5 893.7L1242.5 894.2L1243.5 894.6L1244.5 894.9L1245.5 895.2L1246.5 895.4L1247.5 895.5L1248.5 895.5" stroke="#2cee2c" stroke-width="2.25" fill="none" stroke-linejoin="round"/>
<text x="258.70" y="490.3" fill="#f4f4f4" letter-spacing="-0.389">1.000</text>
<text x="258.70" y="544.5" fill="#f4f4f4" letter-spacing="-0.389">0.750</text>
<text x="258.70" y="598.8" fill="#f4f4f4" letter-spacing="-0.389">0.500</text>
<text x="258.70" y="653.0" fill="#f4f4f4" letter-spacing="-0.389">0.250</text>
<text x="258.70" y="707.3" fill="#f4f4f4" letter-spacing="-0.389">0.000</text>
<text x="254.30" y="761.5" fill="#f4f4f4" letter-spacing="-0.157">-0.250</text>
<text x="254.30" y="815.8" fill="#f4f4f4" letter-spacing="-0.157">-0.500</text>
<text x="254.30" y="870.0" fill="#f4f4f4" letter-spacing="-0.157">-0.750</text>
<text x="254.30" y="924.3" fill="#f4f4f4" letter-spacing="-0.157">-1.000</text>
<text x="275.40" y="936.6" fill="#f4f4f4" letter-spacing="-0.364">0.000ms</text>
<text x="434.40" y="936.6" fill="#f4f4f4" letter-spacing="-0.364">0.500ms</text>
<text x="593.40" y="936.6" fill="#f4f4f4" letter-spacing="-0.364">1.000ms</text>
<text x="752.40" y="936.6" fill="#f4f4f4" letter-spacing="-0.364">1.500ms</text>
<text x="911.40" y="936.6" fill="#f4f4f4" letter-spacing="-0.364">2.000ms</text>
<text x="1070.40" y="936.6" fill="#f4f4f4" letter-spacing="-0.364">2.500ms</text>
<text x="1229.40" y="936.6" fill="#f4f4f4" letter-spacing="-0.364">3.000ms</text>
<text x="186.00" y="497.2" fill="#34c834" letter-spacing="0.087">A: r4_2</text>
<text x="186.00" y="513.6" fill="#ecec54" letter-spacing="-0.113">B: r2[i]</text>
<text x="186.00" y="528.2" fill="#34ccdc" letter-spacing="-0.199">C: r3[i]</text>
</svg>
<div style="left:176px;top:949px;width:1102px;height:6px;background:#f8f7f2"></div>
<svg style="left:0;top:0" width="1280" height="1024" viewBox="0 0 1280 1024" font-family="'Liberation Sans',sans-serif" font-size="11px">
<rect x="176" y="955" width="1102" height="17" fill="#ece9d8"/>
<path d="M184 955.5H331.6M427.6 955.5H1278" stroke="#222" stroke-width="1"/>
<path d="M184.6 955.5L189.3 970H247L251.6 955.5" fill="#fff" stroke="#111" stroke-width="1.1" stroke-linejoin="round"/>
<path d="M250.6 955.5L254.8 970H328L331.5 962.5L329.8 955.5" fill="#fff" stroke="#111" stroke-width="1.1" stroke-linejoin="round"/>
<path d="M428.4 955.5L426.4 962L429.3 970H506L510.4 955.5" fill="#fff" stroke="#111" stroke-width="1.1" stroke-linejoin="round"/>
<path d="M331.6 955.5L336 970H423.3L427.6 955.5" fill="#ece9d8" stroke="#111" stroke-width="1.1" stroke-linejoin="round"/>
<path d="M332.6 955.5H426.6" stroke="#ece9d8" stroke-width="1.8"/>
</svg>
<svg style="left:0;top:0" width="1280" height="1024" viewBox="0 0 1280 1024" font-family="'Liberation Sans',sans-serif" font-size="11px">
<text x="190.30" y="967" fill="#000" letter-spacing="-0.399">AC Analysis</text>
<text x="254.40" y="967" fill="#000" letter-spacing="-0.246">Operating Point</text>
<text x="430.20" y="967" fill="#000" letter-spacing="-0.311">Fourier Analysis</text>
<text x="337.60" y="967" fill="#000" letter-spacing="-0.381">Transient Analysis</text>
</svg>
<div style="left:0;top:974px;width:1280px;height:20px;background:#ece9d8"></div>
<div style="left:0;top:976px;width:1280px;height:1px;background:#fbfaf6"></div>
<div style="left:1px;top:977px;width:49px;height:17px;border:1px solid;border-color:#aca899 #fff #fff #aca899"></div>
<div style="left:52px;top:977px;width:1226px;height:17px;border:1px solid;border-color:#aca899 #fff #fff #aca899"></div>
<svg width="0" height="0" style="left:0;top:0"><defs><radialGradient id="ffg" cx="0.65" cy="0.4" r="0.75"><stop offset="0" stop-color="#ffe040"/><stop offset="0.55" stop-color="#f89020"/><stop offset="1" stop-color="#d83818"/></radialGradient><radialGradient id="ffb" cx="0.5" cy="0.3" r="0.7"><stop offset="0" stop-color="#40b0e8"/><stop offset="1" stop-color="#2848b0"/></radialGradient><linearGradient id="ffo" x1="0" y1="0" x2="1" y2="1"><stop offset="0" stop-color="#f8a020"/><stop offset="1" stop-color="#e04818"/></linearGradient></defs></svg>
<div style="left:0;top:994px;width:1280px;height:30px;background:linear-gradient(to bottom,#1c4cb4 0%,#3a80e4 4%,#3c90ea 8%,#2a68de 14%,#2458d6 21%,#2258d8 45%,#245ee0 60%,#2664e2 86%,#2258d0 94%,#1a44b0 100%)"></div>
<div style="left:0;top:994px;width:98px;height:30px;border-radius:0 5px 6px 0/0 10px 12px 0;background:linear-gradient(to bottom,#6cba6c 0%,#3f9f3f 10%,#379637 40%,#3a9a3a 70%,#2f862f 90%,#226c22 100%);box-shadow:inset -6px 0 8px -3px #1d5e1d, 2px 0 3px #1c3f9c"></div>
<svg style="left:10px;top:999px" width="20" height="19" viewBox="0 0 20 19" ><path d="M2.5 3.5Q6 1 9.5 3L8.3 9Q5 7.3 1.3 9.4Z" fill="#e8602c"/><path d="M11 3.3Q14.5 5 18.3 2.8L17 8.6Q13.5 10.6 9.8 9Z" fill="#7cc43c"/>
<path d="M1 10.6Q4.5 8.5 8 10.3L6.8 16Q3.5 14.3 0 16.4Z" fill="#4a8cf0"/><path d="M9.5 10.4Q13 12 16.8 9.8L15.5 15.8Q12 17.8 8.3 16Z" fill="#f0c030"/></svg>

<span style="left:35.80px;top:998.5px;letter-spacing:-0.907px;font-size:18.5px;white-space:nowrap;font-weight:bold;font-style:italic;color:#fff;text-shadow:1px 1px 2px #1c501c;">Start</span>
<div style="left:109.5px;top:998px;height:23px;width:158px;border-radius:3px;background:linear-gradient(to bottom,#6aa0f6 0%,#4a86f0 12%,#3c7cee 50%,#3a78ea 85%,#2f68d8 100%);box-shadow:inset 1px 1px 0 #78aaf8, inset -1px -1px 0 #2a58c0"></div>
<span style="left:137.20px;top:1002.1px;letter-spacing:-0.182px;font-size:11.5px;white-space:nowrap;color:#fff;">Krill - A kis erősítő, a...</span>
<svg style="left:118.5px;top:1001.5px" width="15" height="15" viewBox="0 0 15 15" ><circle cx="7.5" cy="7.2" r="6.6" fill="url(#ffg)"/><circle cx="8.2" cy="5.6" r="4" fill="url(#ffb)"/><path d="M3.2 5.2Q4.5 9.8 8.5 10Q11.5 10 12.2 7Q12.6 9.6 10.6 11.4Q7.5 13.4 4.4 11.4Q1.6 9 3.2 5.2Z" fill="#1c1c40" opacity=".75"/><path d="M1 6.5Q1.2 3.4 3.6 2Q3 4 4.2 5.6Q4 8.8 7.6 9.2Q10.4 9.2 11.4 7.4Q11 11 7.6 11.6Q3.6 11.8 2 9.4Q1 8 1 6.5Z" fill="url(#ffo)"/></svg>

<div style="left:269.5px;top:998px;height:23px;width:158px;border-radius:3px;background:linear-gradient(to bottom,#6aa0f6 0%,#4a86f0 12%,#3c7cee 50%,#3a78ea 85%,#2f68d8 100%);box-shadow:inset 1px 1px 0 #78aaf8, inset -1px -1px 0 #2a58c0"></div>
<span style="left:297.50px;top:1002.1px;letter-spacing:-0.410px;font-size:11.5px;white-space:nowrap;color:#fff;">Könyvtár</span>
<svg style="left:278.5px;top:1001.5px" width="15" height="15" viewBox="0 0 15 15" ><circle cx="7.5" cy="7.2" r="6.6" fill="url(#ffg)"/><circle cx="8.2" cy="5.6" r="4" fill="url(#ffb)"/><path d="M3.2 5.2Q4.5 9.8 8.5 10Q11.5 10 12.2 7Q12.6 9.6 10.6 11.4Q7.5 13.4 4.4 11.4Q1.6 9 3.2 5.2Z" fill="#1c1c40" opacity=".75"/><path d="M1 6.5Q1.2 3.4 3.6 2Q3 4 4.2 5.6Q4 8.8 7.6 9.2Q10.4 9.2 11.4 7.4Q11 11 7.6 11.6Q3.6 11.8 2 9.4Q1 8 1 6.5Z" fill="url(#ffo)"/></svg>

<div style="left:429.5px;top:998px;height:23px;width:158px;border-radius:3px;background:linear-gradient(to bottom,#6aa0f6 0%,#4a86f0 12%,#3c7cee 50%,#3a78ea 85%,#2f68d8 100%);box-shadow:inset 1px 1px 0 #78aaf8, inset -1px -1px 0 #2a58c0"></div>
<span style="left:458.30px;top:1002.1px;letter-spacing:-0.316px;font-size:11.5px;white-space:nowrap;color:#fff;">Total Commander 6.5...</span>
<svg style="left:438.0px;top:1001px" width="17" height="16" viewBox="0 0 17 16" ><rect x="0.5" y="0.5" width="16" height="15" fill="#1c2c98" stroke="#101860"/><rect x="3" y="1" width="10" height="5" fill="#f0f0f0"/><rect x="9.5" y="1.6" width="2" height="3.6" fill="#1c2c98"/><rect x="2" y="7.5" width="13" height="8" fill="#fff"/><path d="M2 9.6H15M2 13H15" stroke="#e02020" stroke-width="1.8"/></svg>

<div style="left:589.5px;top:998px;height:23px;width:158px;border-radius:3px;background:linear-gradient(to bottom,#6aa0f6 0%,#4a86f0 12%,#3c7cee 50%,#3a78ea 85%,#2f68d8 100%);box-shadow:inset 1px 1px 0 #78aaf8, inset -1px -1px 0 #2a58c0"></div>
<span style="left:618.00px;top:1002.1px;letter-spacing:-0.185px;font-size:11.5px;white-space:nowrap;color:#fff;">Adobe Reader - [ano...</span>
<svg style="left:598.0px;top:1000px" width="17" height="17" viewBox="0 0 17 17" ><rect x="1" y="1.5" width="14.5" height="14.5" fill="#e43a24"/><path d="M1 3L6 1.5L5 15.5L1 16Z" fill="#f8f4f0"/><path d="M5.5 14Q8 8 9 3Q10 8 14.5 11.5Q9 10.5 5.5 14Z" fill="none" stroke="#fff" stroke-width="1.4"/></svg>

<div style="left:749.5px;top:998px;height:23px;width:158px;border-radius:3px;background:linear-gradient(to bottom,#1c48b0 0%,#2456c6 15%,#2659cc 60%,#285cd0 100%);box-shadow:inset 1px 1px 1px #143890, inset -1px -1px 0 #3468d8"></div>
<span style="left:778.80px;top:1002.1px;letter-spacing:-0.620px;font-size:11.5px;white-space:nowrap;color:#fff;">CircuitMaker</span>
<svg style="left:759.0px;top:1001px" width="16" height="16" viewBox="0 0 16 16" ><rect x="0" y="0" width="16" height="16" fill="#f4c8e4"/><rect x="1.5" y="1.5" width="13" height="13" fill="#fff" stroke="#e9a0d0"/><path d="M2 5H10 M4 3V12 M6.5 5V11H9" stroke="#303030" stroke-width="1.2" fill="none"/><circle cx="11.5" cy="4.5" r="2.3" fill="#e01818"/><circle cx="5" cy="11.5" r="2" fill="#18a030"/><circle cx="11.5" cy="11" r="2.4" fill="#1828c0"/></svg>

<div style="left:1151px;top:994px;width:129px;height:30px;background:linear-gradient(to bottom,#3aa8f4 0%,#1a92ec 10%,#1288e8 50%,#1690ee 85%,#0f74cc 100%);box-shadow:inset 1px 0 0 #0a5cb8, inset 2px 0 0 #4ab4f8"></div>
<span style="left:1116.00px;top:1002.5px;letter-spacing:-2.617px;font-size:11.5px;white-space:nowrap;color:#fff;">HU</span>
<span style="left:1240.00px;top:1002.5px;letter-spacing:-0.527px;font-size:11.5px;white-space:nowrap;color:#fff;">13:35</span>
<svg style="left:1162px;top:1001px" width="17" height="16" viewBox="0 0 17 16" ><path d="M3 13.5L11 2.5L15 4.5L9 14Z" fill="#d8d8e0"/><path d="M5 12L10 4" stroke="#2030c0" stroke-width="2"/><path d="M7 12.5L12 4.5" stroke="#20b040" stroke-width="2"/><path d="M9 13L14 5" stroke="#e03030" stroke-width="2"/><path d="M1 10L4.5 13.5H12" stroke="#f0f0f0" stroke-width="1.6" fill="none"/><path d="M3 15H12" stroke="#403020" stroke-width="1.4"/></svg>

<svg style="left:1181px;top:1001px" width="15" height="16" viewBox="0 0 15 16" ><path d="M1 5.5H4L9 1.5V14.5L4 10.5H1Z" fill="#f07830" stroke="#a04010" stroke-width="0.8"/><path d="M10.5 3Q12.5 8 10.5 13M12.8 1.5Q15.5 8 12.8 14.5" fill="none" stroke="#303848" stroke-width="1.3"/></svg>

<svg style="left:1198px;top:1001px" width="16" height="16" viewBox="0 0 16 16" ><circle cx="7" cy="7" r="6" fill="#8890a0" stroke="#505868" stroke-width="1"/><circle cx="6" cy="6" r="2.6" fill="#e8e8f0"/><path d="M9 13L14 9.5" stroke="#7ab0f0" stroke-width="2.4"/></svg>

<svg style="left:1217px;top:1000px" width="14" height="17" viewBox="0 0 14 17" ><path d="M7 1Q10 3 13 3Q13.5 11 7 16Q0.5 11 1 3Q4 3 7 1Z" fill="#e02028" stroke="#f0d0d0" stroke-width="0.8"/><path d="M4.6 5.8L9.4 10.6M9.4 5.8L4.6 10.6" stroke="#fff" stroke-width="1.8"/></svg>

</body></html>
